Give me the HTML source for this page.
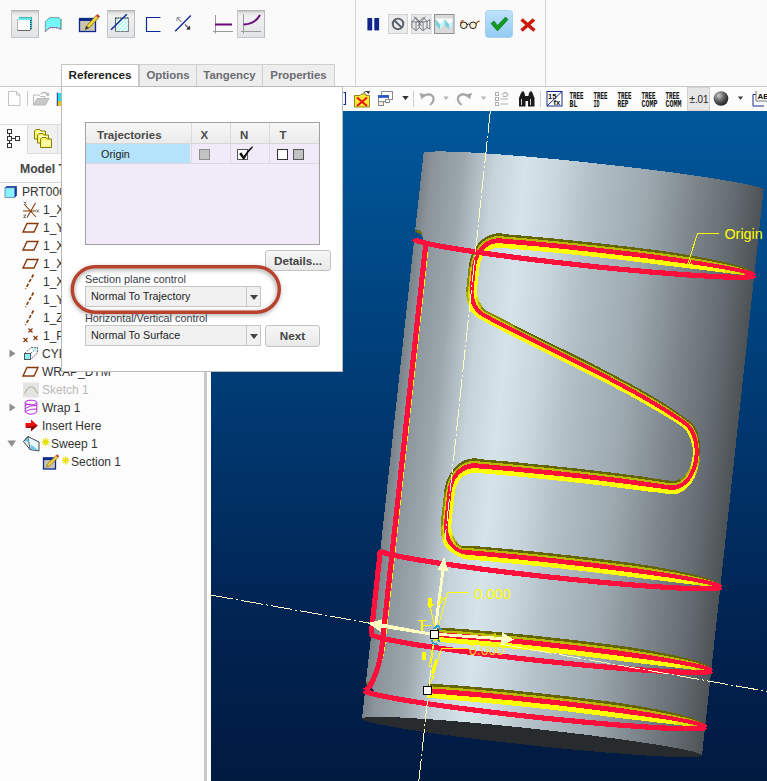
<!DOCTYPE html>
<html><head><meta charset="utf-8"><title>Sweep</title>
<style>
*{box-sizing:border-box}
html,body{margin:0;padding:0}
body{width:767px;height:781px;position:relative;overflow:hidden;background:#fbfbfb;font-family:"Liberation Sans",sans-serif;font-size:12px;color:#333}
.abs{position:absolute}
.vp{position:absolute;left:211px;top:111px}
#ribbon{left:0;top:0;width:767px;height:86px;background:#fafafa}
.vline{position:absolute;width:1px;background:#d4d4d4}
.hline{position:absolute;height:1px;background:#c9c9c9}
.pressed{position:absolute;background:linear-gradient(#c4c4c4 0,#e4e4e5 8%,#f0f0f1 22%,#e1e4e6 100%);border:1px solid #c6c6c6;border-top-color:#b4b4b4;border-right-color:#bcbcbc}
#tree{left:0;top:111px;width:204px;height:670px;background:#fcfcfc}
.row{position:absolute;left:0;height:18px;line-height:18px;font-size:12px;color:#333;white-space:nowrap}
.tab{position:absolute;top:64px;height:23px;border:1px solid #cfcfcf;background:#eeeeee;color:#6b6b72;font-weight:bold;font-size:11.4px;line-height:20px;text-align:center}
.tab.act{background:#fff;color:#1e1e1e;border-color:#c4c4c4;z-index:3;font-size:11.7px}
#panel{left:61px;top:86px;width:282px;height:286px;background:#fff;border:1px solid #b9b9b9;z-index:2}
.btn{position:absolute;border:1px solid #c3c3c3;border-radius:3px;background:linear-gradient(#f7f7f7,#e9e9e9);font-weight:bold;color:#444;font-size:11.7px;text-align:center}
.dd{position:absolute;border:1px solid #c6c6c6;background:#f1f1f1;font-size:10.8px;color:#222;line-height:19px;padding-left:5px}
.dd i{position:absolute;right:0;top:0;width:14px;height:100%;border-left:1px solid #c6c6c6}
.dd i:after{content:"";position:absolute;left:3px;top:8px;border:4px solid transparent;border-top:5px solid #444;border-bottom:0}
.lbl{position:absolute;font-size:10.8px;color:#363b46;white-space:nowrap}
</style></head><body>
<svg class="vp" width="556" height="670" viewBox="211 111 556 670" shape-rendering="crispEdges">
<defs><linearGradient id="bg" x1="0" y1="0" x2="0" y2="1"><stop offset="0" stop-color="#00589c"/><stop offset="0.4" stop-color="#003c75"/><stop offset="0.75" stop-color="#012453"/><stop offset="1" stop-color="#011a40"/></linearGradient>
<linearGradient id="cyl" gradientUnits="userSpaceOnUse" x1="392.8" y1="435.9" x2="732.8" y2="472.6"><stop offset="0" stop-color="#788288"/><stop offset="0.03" stop-color="#8a949a"/><stop offset="0.12" stop-color="#9da8ae"/><stop offset="0.21" stop-color="#c6d3db"/><stop offset="0.3" stop-color="#d5e3eb"/><stop offset="0.39" stop-color="#cad7df"/><stop offset="0.5" stop-color="#b3bfc6"/><stop offset="0.65" stop-color="#9fabb2"/><stop offset="0.8" stop-color="#7d868c"/><stop offset="0.92" stop-color="#646b70"/><stop offset="1" stop-color="#4c5256"/></linearGradient></defs>
<rect x="211" y="111" width="556" height="670" fill="url(#bg)"/>
<path fill="#272b2e" d="M702 755.3 L701.8 754.8 L701.1 754.3 L700 753.8 L698.4 753.2 L696.3 752.5 L693.8 751.8 L690.8 751.1 L687.4 750.3 L683.6 749.5 L679.3 748.6 L674.6 747.7 L669.5 746.8 L664.1 745.9 L658.2 744.9 L652.1 743.9 L645.5 742.9 L638.7 741.9 L631.6 740.9 L624.2 739.8 L616.5 738.8 L608.6 737.7 L600.5 736.7 L592.2 735.6 L583.7 734.6 L575.1 733.5 L566.3 732.5 L557.5 731.4 L548.6 730.4 L539.6 729.4 L530.7 728.5 L521.7 727.5 L512.7 726.6 L503.9 725.7 L495 724.8 L486.3 724 L477.8 723.2 L469.3 722.5 L461.1 721.8 L453 721.1 L445.2 720.5 L437.6 719.9 L430.3 719.3 L423.2 718.9 L416.5 718.4 L410.1 718.1 L404 717.7 L398.3 717.5 L392.9 717.2 L387.9 717.1 L383.4 717 L379.2 716.9 L375.5 716.9 L372.2 717 L369.4 717.1 L367 717.3 L365.1 717.5 L363.6 717.8 L362.6 718.1 L362.1 718.5 L362 718.9 L362.5 719.4 L363.4 720 L364.7 720.5 L366.6 721.2 L368.9 721.8 L371.6 722.6 L374.8 723.3 L378.4 724.1 L382.5 724.9 L387 725.8 L391.9 726.7 L397.1 727.6 L402.8 728.6 L408.8 729.6 L415.2 730.6 L421.8 731.6 L428.8 732.6 L436.1 733.6 L443.7 734.7 L451.4 735.7 L459.5 736.8 L467.7 737.9 L476.1 738.9 L484.6 740 L493.3 741 L502.1 742.1 L511 743.1 L519.9 744.1 L528.9 745.1 L537.8 746 L546.8 747 L555.7 747.9 L564.6 748.7 L573.3 749.6 L582 750.4 L590.5 751.2 L598.8 751.9 L607 752.6 L614.9 753.2 L622.6 753.8 L630.1 754.4 L637.3 754.9 L644.2 755.4 L650.8 755.8 L657 756.1 L662.9 756.4 L668.5 756.7 L673.6 756.9 L678.4 757 L682.8 757.1 L686.7 757.1 L690.2 757.1 L693.3 757 L695.9 756.8 L698 756.6 L699.7 756.4 L701 756.1 L701.7 755.7 L702 755.3Z"/>
<path fill="url(#cyl)" d="M423.6 153.2 L423.8 152.9 L424.2 152.6 L424.9 152.3 L425.9 152.1 L427.1 151.9 L428.6 151.8 L430.4 151.6 L432.4 151.5 L434.7 151.5 L437.2 151.4 L440 151.4 L443 151.4 L446.3 151.5 L449.7 151.6 L453.5 151.7 L457.4 151.8 L461.6 152 L465.9 152.2 L470.5 152.5 L475.2 152.8 L480.2 153.1 L485.3 153.4 L490.6 153.8 L496.1 154.1 L501.7 154.6 L507.4 155 L513.3 155.5 L519.3 156 L525.5 156.5 L531.7 157 L538.1 157.6 L544.5 158.2 L551 158.8 L557.6 159.4 L564.2 160.1 L570.9 160.7 L577.6 161.4 L584.4 162.1 L591.1 162.8 L597.9 163.6 L604.6 164.3 L611.4 165.1 L618.1 165.8 L624.7 166.6 L631.4 167.4 L637.9 168.2 L644.4 168.9 L650.8 169.7 L657.1 170.5 L663.4 171.3 L669.5 172.1 L675.5 172.9 L681.3 173.7 L687 174.5 L692.6 175.3 L698 176.1 L703.3 176.9 L708.4 177.6 L713.2 178.4 L718 179.1 L722.5 179.9 L726.8 180.6 L730.9 181.3 L734.7 182 L738.4 182.7 L741.8 183.3 L745 183.9 L748 184.6 L750.7 185.2 L753.1 185.7 L755.4 186.3 L757.3 186.8 L759 187.3 L760.4 187.8 L761.6 188.3 L762.5 188.7 L763.1 189.1 L763.5 189.5 L763.6 189.8 L702 755.3 L701.9 755 L701.5 754.6 L700.9 754.2 L700 753.8 L698.8 753.3 L697.4 752.8 L695.7 752.3 L693.8 751.8 L691.5 751.2 L689.1 750.7 L686.4 750.1 L683.4 749.4 L680.2 748.8 L676.8 748.2 L673.1 747.5 L669.3 746.8 L665.2 746.1 L660.9 745.4 L656.4 744.6 L651.6 743.9 L646.8 743.1 L641.7 742.4 L636.4 741.6 L631 740.8 L625.4 740 L619.7 739.2 L613.9 738.4 L607.9 737.6 L601.8 736.8 L595.5 736 L589.2 735.2 L582.8 734.4 L576.3 733.7 L569.8 732.9 L563.1 732.1 L556.5 731.3 L549.8 730.6 L543 729.8 L536.3 729.1 L529.5 728.3 L522.8 727.6 L516 726.9 L509.3 726.2 L502.6 725.6 L496 724.9 L489.4 724.3 L482.9 723.7 L476.5 723.1 L470.1 722.5 L463.9 722 L457.7 721.5 L451.7 721 L445.8 720.5 L440.1 720.1 L434.5 719.6 L429 719.3 L423.7 718.9 L418.6 718.6 L413.6 718.3 L408.9 718 L404.3 717.7 L400 717.5 L395.8 717.3 L391.9 717.2 L388.1 717.1 L384.7 717 L381.4 716.9 L378.4 716.9 L375.6 716.9 L373.1 717 L370.8 717 L368.8 717.1 L367 717.3 L365.5 717.4 L364.3 717.6 L363.3 717.8 L362.6 718.1 L362.2 718.4 L362 718.7Z"/>
<g>
<path fill="#004b8c" d="M412 229.5 L417 230.5 L422.5 236.5 L424.5 244 L419 243.5 L412 241 Z"/><path fill="#6e6e00" d="M415.3 231.5 L418 229.8 L421 231 L423 234.8 L420 234 Z"/>
<path fill="#02214c" d="M363 683 L366.5 684 L372 688 L374 691 L371 692.5 L364 694 Z"/><path fill="#6e6e00" d="M366 683.5 L372 679 L371 683 L369 685.5 Z"/>
<path fill="#646400" d="M754.3 275.4 L754.3 274.4 L754 273.6 L753.6 272.8 L752.9 272.1 L752 271.4 L750.9 270.7 L749.6 270 L748.1 269.2 L746.3 268.5 L744.4 267.7 L742.2 267 L739.9 266.2 L737.4 265.5 L734.6 264.7 L731.7 263.9 L728.6 263.1 L725.3 262.3 L721.9 261.5 L718.2 260.7 L714.4 259.9 L710.4 259.1 L706.3 258.3 L702 257.5 L697.6 256.7 L693 255.8 L688.3 255 L683.5 254.2 L678.5 253.4 L673.4 252.6 L668.2 251.8 L662.9 251.1 L657.5 250.3 L652 249.6 L646.4 248.9 L640.7 248.2 L635 247.5 L629.2 246.8 L623.3 246.1 L617.4 245.4 L611.5 244.7 L605.5 244 L599.5 243.4 L593.5 242.7 L587.5 242 L581.4 241.4 L575.4 240.7 L569.4 240.1 L563.4 239.5 L557.4 238.9 L551.5 238.3 L545.6 237.8 L539.8 237.2 L534 236.7 L528.2 236.1 L522.6 235.6 L517 235.2 L511.5 234.7 L506.1 234.3 L500.7 233.3 L496.9 233.4 L492.9 234.1 L489.1 235.4 L485.6 237.2 L482.2 239.6 L479.2 242.4 L476.5 245.8 L474.1 249.4 L472.1 253.4 L470.6 257.7 L469.4 262.1 L468.7 266.5 L470.6 266.6 L471.2 262.5 L472.3 258.4 L473.8 254.5 L475.6 250.8 L477.8 247.3 L480.4 244.3 L483.2 241.6 L486.3 239.4 L489.7 237.8 L493.2 236.6 L496.9 236 L500.5 236 L505.9 236.7 L511.3 237.1 L516.8 237.6 L522.3 238.1 L528 238.6 L533.7 239.1 L539.5 239.6 L545.3 240.2 L551.2 240.8 L557.2 241.3 L563.1 241.9 L569.1 242.6 L575.1 243.2 L581.2 243.8 L587.2 244.5 L593.2 245.1 L599.3 245.8 L605.3 246.5 L611.2 247.1 L617.2 247.8 L623.1 248.5 L628.9 249.2 L634.7 249.9 L640.5 250.6 L646.1 251.4 L651.7 252.1 L657.2 252.8 L662.6 253.5 L667.9 254.2 L673.2 255 L678.2 255.7 L683.2 256.5 L688.1 257.3 L692.8 258.1 L697.4 258.8 L701.8 259.6 L706.1 260.4 L710.2 261.1 L714.2 261.9 L718 262.7 L721.7 263.4 L725.1 264.1 L728.4 264.9 L731.5 265.6 L734.5 266.3 L737.2 267 L739.7 267.7 L742.1 268.4 L744.2 269 L746.2 269.7 L747.9 270.3 L749.5 271 L750.8 271.6 L751.9 272.2 L752.8 272.8 L753.5 273.4 L754 274 L754.3 274.6 L754.3 275.4Z"/>
<path fill="#8a8a00" d="M468.7 266.5 L468 273.6 L467.2 280.5 L466.4 287.6 L466.2 292.2 L468 292 L468.3 287.7 L469 280.6 L469.8 273.7 L470.6 266.6Z"/>
<path fill="#b1b100" d="M466.2 292.2 L466.4 296.8 L467.1 301.3 L468.9 300.5 L468.2 296.3 L468 292Z"/>
<path fill="#d8d800" d="M467.1 301.3 L468.2 305.6 L470 304.5 L468.9 300.5Z"/>
<path fill="#ffff00" d="M468.2 305.6 L469.8 309.6 L472.1 313.1 L475 315.8 L478.2 317.9 L481.4 319.7 L486.1 322.3 L490.7 324.9 L495.5 327.4 L500.4 329.9 L505.3 332.5 L510.3 335.1 L515.4 337.6 L520.6 340.2 L525.8 342.9 L531.1 345.5 L536.4 348.1 L541.8 350.8 L547.1 353.5 L552.6 356.2 L558 358.8 L563.5 361.6 L569 364.3 L574.4 367 L579.9 369.7 L585.4 372.5 L590.8 375.2 L596.2 378 L601.6 380.8 L607 383.5 L612.3 386.3 L617.6 389.1 L622.8 391.9 L628 394.7 L633 397.4 L638.1 400.2 L643 403 L647.9 405.8 L652.6 408.6 L657.3 411.3 L661.9 414 L666.4 416.7 L670.8 419.4 L675.1 422.1 L679.2 424.8 L683.2 427.4 L685.1 429 L686.6 431.1 L687.9 433.4 L689 435.8 L690 438.1 L691 440.6 L691.7 443.2 L692.3 445.9 L692.7 448.7 L692.8 451.6 L692.7 454.4 L692.5 457.3 L692 460.2 L691.4 462.9 L690.5 465.6 L691.8 466.5 L692.6 463.6 L693.3 460.7 L693.8 457.6 L694.1 454.5 L694.2 451.4 L694 448.3 L693.7 445.3 L693.1 442.4 L692.3 439.6 L691.3 436.9 L690.2 434.4 L688.9 431.9 L687.4 429.6 L685.8 427.6 L683.8 425.9 L679.8 423.2 L675.7 420.5 L671.5 417.8 L667.1 415.1 L662.7 412.4 L658.1 409.6 L653.4 406.9 L648.6 404.1 L643.8 401.3 L638.9 398.5 L633.8 395.8 L628.8 393 L623.6 390.2 L618.4 387.4 L613.1 384.6 L607.8 381.8 L602.5 379.1 L597.1 376.3 L591.7 373.5 L586.2 370.8 L580.8 368 L575.3 365.3 L569.8 362.6 L564.3 359.9 L558.9 357.2 L553.4 354.5 L548 351.8 L542.6 349.1 L537.2 346.4 L531.9 343.8 L526.6 341.2 L521.4 338.5 L516.2 335.9 L511.1 333.4 L506.1 330.8 L501.1 328.2 L496.3 325.7 L491.5 323.2 L486.8 320.6 L482.2 318.1 L479.2 316.3 L476.2 314.2 L473.6 311.5 L471.5 308.2 L470 304.5Z"/>
<path fill="#d8d800" d="M690.5 465.6 L689.5 468.1 L690.7 469.2 L691.8 466.5Z"/>
<path fill="#b1b100" d="M689.5 468.1 L688.3 470.5 L686.9 472.7 L685.4 474.6 L686.4 476.3 L688 474.1 L689.4 471.8 L690.7 469.2Z"/>
<path fill="#8a8a00" d="M685.4 474.6 L683.8 476.3 L682 477.8 L680.1 479 L680.7 481 L682.7 479.7 L684.6 478.1 L686.4 476.3Z"/>
<path fill="#646400" d="M680.1 479 L678.1 479.9 L676.1 480.5 L674 480.8 L671.8 480.8 L669.6 480.6 L664.9 480.2 L660.1 479.4 L655.1 478.6 L650 477.8 L644.8 476.9 L639.5 476.2 L634.1 475.5 L628.5 474.8 L622.9 474.1 L617.2 473.3 L611.5 472.6 L605.6 471.9 L599.7 471.2 L593.8 470.5 L587.8 469.8 L581.8 469.1 L575.8 468.4 L569.7 467.8 L563.6 467.1 L557.5 466.5 L551.5 465.8 L545.4 465.2 L539.4 464.6 L533.4 464 L527.4 463.4 L521.4 462.8 L515.5 462.2 L509.7 461.7 L503.9 461.2 L498.3 460.7 L492.6 460.2 L487.1 459.7 L481.7 459.3 L476.2 458.4 L472.4 458.4 L468.4 459.1 L464.6 460.4 L461 462.2 L457.7 464.6 L454.7 467.5 L452 470.8 L449.6 474.4 L447.6 478.4 L446.1 482.7 L444.9 487.1 L444.2 491.5 L446 491.6 L446.7 487.5 L447.8 483.4 L449.2 479.5 L451.1 475.8 L453.3 472.4 L455.9 469.3 L458.7 466.6 L461.8 464.4 L465.2 462.8 L468.7 461.6 L472.4 461 L476 461 L481.4 461.7 L486.8 462.1 L492.4 462.6 L498 463.1 L503.7 463.6 L509.4 464.1 L515.3 464.7 L521.2 465.2 L527.1 465.8 L533.1 466.4 L539.1 467 L545.1 467.6 L551.2 468.2 L557.3 468.9 L563.4 469.5 L569.4 470.2 L575.5 470.9 L581.5 471.6 L587.6 472.2 L593.5 472.9 L599.5 473.6 L605.4 474.3 L611.2 475.1 L617 475.8 L622.6 476.5 L628.3 477.2 L633.8 477.9 L639.2 478.6 L644.5 479.4 L649.8 480.1 L654.9 480.9 L659.8 481.7 L664.7 482.5 L669.4 483 L671.8 483.2 L674.1 483.1 L676.4 482.8 L678.6 482.1 L680.7 481Z"/>
<path fill="#8a8a00" d="M444.2 491.5 L443.5 497.8 L442.9 504 L442.2 510.1 L441.5 516.3 L440.8 522.7 L440.6 527 L442.4 526.8 L442.7 522.7 L443.3 516.4 L444 510.3 L444.7 504.1 L445.4 497.9 L446 491.6Z"/>
<path fill="#b1b100" d="M440.6 527 L440.8 531.5 L441.4 535.9 L443.2 535.1 L442.6 531 L442.4 526.8Z"/>
<path fill="#d8d800" d="M441.4 535.9 L442.4 540.1 L444.2 539 L443.2 535.1Z"/>
<path fill="#ffff00" d="M442.4 540.1 L444 544.1 L446 547.6 L448.7 550.3 L451.8 552.5 L455 554.3 L458.3 556.1 L461.7 557.9 L465.3 559.2 L470.7 559.8 L476.1 560.2 L481.6 560.7 L487.1 561.2 L492.8 561.7 L498.5 562.2 L504.3 562.8 L510.1 563.3 L516 563.9 L522 564.5 L527.9 565.1 L533.9 565.7 L540 566.3 L546 566.9 L552 567.6 L558 568.2 L564.1 568.9 L570.1 569.6 L576 570.3 L582 570.9 L587.9 571.6 L593.7 572.3 L599.5 573 L605.3 573.8 L610.9 574.5 L616.5 575.2 L622 575.9 L627.4 576.6 L632.8 577.3 L638 577.9 L643.1 578.5 L648.1 579.1 L652.9 579.7 L657.7 580.3 L662.3 580.8 L666.7 581.4 L671.1 581.9 L675.2 582.4 L679.2 582.9 L683.1 583.4 L686.8 583.8 L690.3 584.3 L693.6 584.7 L693.8 582.9 L690.5 582.5 L687 582 L683.3 581.4 L679.4 580.9 L675.4 580.4 L671.3 579.8 L667 579.2 L662.5 578.6 L657.9 578 L653.2 577.4 L648.3 576.8 L643.3 576.2 L638.2 575.5 L633 574.9 L627.7 574.2 L622.3 573.5 L616.8 572.7 L611.2 572 L605.5 571.3 L599.8 570.6 L594 569.9 L588.2 569.2 L582.2 568.5 L576.3 567.8 L570.3 567.1 L564.3 566.5 L558.3 565.8 L552.3 565.1 L546.2 564.5 L540.2 563.9 L534.2 563.2 L528.2 562.6 L522.2 562 L516.3 561.4 L510.4 560.9 L504.6 560.3 L498.8 559.8 L493.1 559.3 L487.4 558.8 L481.8 558.3 L476.3 557.8 L470.9 557.4 L465.6 556.8 L462.1 555.8 L458.9 554.3 L455.8 552.6 L452.8 550.8 L450 548.7 L447.6 546 L445.6 542.7 L444.2 539Z"/>
<path fill="#e2e200" d="M693.6 584.7 L696.7 585.1 L699.7 585.4 L702.5 585.8 L705.1 586.1 L707.5 586.4 L707.6 585 L705.2 584.7 L702.6 584.3 L699.9 583.8 L696.9 583.4 L693.8 582.9Z"/>
<path fill="#c5c500" d="M707.5 586.4 L709.6 586.7 L711.6 586.9 L713.4 587.1 L715 587.3 L716.4 587.5 L716.5 586.6 L715.1 586.3 L713.6 586 L711.8 585.7 L709.8 585.4 L707.6 585Z"/>
<path fill="#a8a800" d="M716.4 587.5 L717.6 587.6 L718.5 587.6 L719.3 587.7 L719.8 587.6 L719.9 587.2 L719.3 587.1 L718.6 587 L717.7 586.8 L716.5 586.6Z"/>
<path fill="#8c8c00" d="M719.8 587.6 L720.2 587.5 L720.3 587 L720.3 587 L720.2 587.2 L719.9 587.2Z"/>
<path fill="#b9b900" d="M754.3 275.4 L754.3 274.6 L754 274 L753.5 273.4 L752.8 272.8 L751.9 272.2 L750.8 271.6 L749.5 271 L747.9 270.3 L746.2 269.7 L744.2 269 L742.1 268.4 L739.7 267.7 L737.2 267 L734.5 266.3 L731.5 265.6 L728.4 264.9 L725.1 264.1 L721.7 263.4 L718 262.7 L714.2 261.9 L710.2 261.1 L706.1 260.4 L701.8 259.6 L697.4 258.8 L692.8 258.1 L688.1 257.3 L683.2 256.5 L678.2 255.7 L673.2 255 L667.9 254.2 L662.6 253.5 L657.2 252.8 L651.7 252.1 L646.1 251.4 L640.5 250.6 L634.7 249.9 L628.9 249.2 L623.1 248.5 L617.2 247.8 L611.2 247.1 L605.3 246.5 L599.3 245.8 L593.2 245.1 L587.2 244.5 L581.2 243.8 L575.1 243.2 L569.1 242.6 L563.1 241.9 L557.2 241.3 L551.2 240.8 L545.3 240.2 L539.5 239.6 L533.7 239.1 L528 238.6 L522.3 238.1 L516.8 237.6 L511.3 237.1 L505.9 236.7 L500.5 236 L496.9 236 L493.2 236.6 L489.7 237.8 L486.3 239.4 L483.2 241.6 L480.4 244.3 L477.8 247.3 L475.6 250.8 L473.8 254.5 L472.3 258.4 L471.2 262.5 L470.6 266.6 L472.2 266.8 L472.8 262.9 L473.8 259.1 L475.2 255.4 L476.9 251.9 L479 248.8 L481.4 245.9 L484.1 243.5 L487 241.4 L490.2 239.9 L493.5 238.8 L496.9 238.3 L500.3 238.3 L505.6 238.8 L511 239.3 L516.5 239.8 L522.1 240.2 L527.7 240.7 L533.5 241.3 L539.3 241.8 L545.1 242.4 L551 242.9 L556.9 243.5 L562.9 244.1 L568.9 244.7 L574.9 245.3 L580.9 246 L587 246.6 L593 247.3 L599 247.9 L605 248.6 L611 249.3 L616.9 250 L622.8 250.7 L628.7 251.4 L634.5 252.1 L640.2 252.8 L645.9 253.5 L651.5 254.2 L657 254.9 L662.4 255.7 L667.7 256.4 L672.9 257.1 L678 257.8 L683 258.6 L687.8 259.3 L692.6 260.1 L697.1 260.8 L701.6 261.5 L705.9 262.2 L710 263 L714 263.7 L717.8 264.4 L721.5 265 L725 265.7 L728.3 266.4 L731.4 267.1 L734.3 267.7 L737.1 268.3 L739.6 269 L742 269.6 L744.1 270.2 L746.1 270.7 L747.8 271.3 L749.4 271.8 L750.7 272.4 L751.8 272.9 L752.8 273.4 L753.5 273.9 L754 274.4 L754.2 274.9 L754.3 275.4Z"/>
<path fill="#caca00" d="M470.6 266.6 L469.8 273.7 L469 280.6 L468.3 287.7 L468 292 L469.7 291.8 L469.9 287.8 L470.7 280.7 L471.4 273.8 L472.2 266.8Z"/>
<path fill="#dcdc00" d="M468 292 L468.2 296.3 L468.9 300.5 L470.5 299.7 L469.9 295.8 L469.7 291.8Z"/>
<path fill="#eded00" d="M468.9 300.5 L470 304.5 L471.5 303.5 L470.5 299.7Z"/>
<path fill="#ffff00" d="M470 304.5 L471.5 308.2 L473.6 311.5 L476.2 314.2 L479.2 316.3 L482.2 318.1 L486.8 320.6 L491.5 323.2 L496.3 325.7 L501.1 328.2 L506.1 330.8 L511.1 333.4 L516.2 335.9 L521.4 338.5 L526.6 341.2 L531.9 343.8 L537.2 346.4 L542.6 349.1 L548 351.8 L553.4 354.5 L558.9 357.2 L564.3 359.9 L569.8 362.6 L575.3 365.3 L580.8 368 L586.2 370.8 L591.7 373.5 L597.1 376.3 L602.5 379.1 L607.8 381.8 L613.1 384.6 L618.4 387.4 L623.6 390.2 L628.8 393 L633.8 395.8 L638.9 398.5 L643.8 401.3 L648.6 404.1 L653.4 406.9 L658.1 409.6 L662.7 412.4 L667.1 415.1 L671.5 417.8 L675.7 420.5 L679.8 423.2 L683.8 425.9 L685.8 427.6 L687.4 429.6 L688.9 431.9 L690.2 434.4 L691.3 436.9 L692.3 439.6 L693.1 442.4 L693.7 445.3 L694 448.3 L694.2 451.4 L694.1 454.5 L693.8 457.6 L693.3 460.7 L692.6 463.6 L691.8 466.5 L692.8 467.3 L693.8 464.3 L694.5 461.1 L695 457.8 L695.3 454.6 L695.4 451.3 L695.2 448 L694.9 444.8 L694.3 441.7 L693.4 438.7 L692.4 435.9 L691.2 433.2 L689.8 430.7 L688.2 428.4 L686.4 426.3 L684.3 424.6 L680.4 421.9 L676.3 419.2 L672.1 416.4 L667.7 413.7 L663.3 410.9 L658.7 408.2 L654.1 405.4 L649.3 402.6 L644.5 399.8 L639.6 397.1 L634.6 394.3 L629.5 391.5 L624.3 388.7 L619.1 385.9 L613.9 383.1 L608.6 380.4 L603.2 377.6 L597.8 374.8 L592.4 372.1 L587 369.3 L581.5 366.5 L576 363.8 L570.6 361.1 L565.1 358.4 L559.6 355.7 L554.2 353 L548.7 350.3 L543.3 347.6 L538 344.9 L532.6 342.3 L527.4 339.6 L522.1 337 L516.9 334.4 L511.8 331.8 L506.8 329.3 L501.8 326.7 L497 324.2 L492.2 321.7 L487.5 319.1 L482.9 316.6 L480 314.8 L477.3 312.7 L474.9 310.1 L473 306.9 L471.5 303.5Z"/>
<path fill="#eded00" d="M691.8 466.5 L690.7 469.2 L691.7 470.2 L692.8 467.3Z"/>
<path fill="#dcdc00" d="M690.7 469.2 L689.4 471.8 L688 474.1 L686.4 476.3 L687.2 477.7 L688.9 475.4 L690.4 472.9 L691.7 470.2Z"/>
<path fill="#caca00" d="M686.4 476.3 L684.6 478.1 L682.7 479.7 L680.7 481 L681.2 482.9 L683.3 481.5 L685.3 479.7 L687.2 477.7Z"/>
<path fill="#b9b900" d="M680.7 481 L678.6 482.1 L676.4 482.8 L674.1 483.1 L671.8 483.2 L669.4 483 L664.7 482.5 L659.8 481.7 L654.9 480.9 L649.8 480.1 L644.5 479.4 L639.2 478.6 L633.8 477.9 L628.3 477.2 L622.6 476.5 L617 475.8 L611.2 475.1 L605.4 474.3 L599.5 473.6 L593.5 472.9 L587.6 472.2 L581.5 471.6 L575.5 470.9 L569.4 470.2 L563.4 469.5 L557.3 468.9 L551.2 468.2 L545.1 467.6 L539.1 467 L533.1 466.4 L527.1 465.8 L521.2 465.2 L515.3 464.7 L509.4 464.1 L503.7 463.6 L498 463.1 L492.4 462.6 L486.8 462.1 L481.4 461.7 L476 461 L472.4 461 L468.7 461.6 L465.2 462.8 L461.8 464.4 L458.7 466.6 L455.9 469.3 L453.3 472.4 L451.1 475.8 L449.2 479.5 L447.8 483.4 L446.7 487.5 L446 491.6 L447.7 491.8 L448.3 487.9 L449.3 484.1 L450.7 480.4 L452.4 476.9 L454.5 473.8 L456.9 470.9 L459.6 468.5 L462.5 466.4 L465.7 464.9 L469 463.8 L472.4 463.3 L475.8 463.3 L481.2 463.9 L486.6 464.3 L492.1 464.8 L497.8 465.3 L503.4 465.8 L509.2 466.3 L515 466.8 L520.9 467.4 L526.9 468 L532.9 468.6 L538.9 469.2 L544.9 469.8 L551 470.4 L557 471 L563.1 471.7 L569.2 472.4 L575.3 473 L581.3 473.7 L587.3 474.4 L593.3 475.1 L599.2 475.8 L605.1 476.5 L611 477.2 L616.7 477.9 L622.4 478.6 L628 479.4 L633.6 480.1 L639 480.8 L644.3 481.5 L649.5 482.3 L654.6 483 L659.6 483.8 L664.5 484.5 L669.2 485.1 L671.7 485.3 L674.2 485.2 L676.6 484.8 L678.9 484 L681.2 482.9Z"/>
<path fill="#caca00" d="M446 491.6 L445.4 497.9 L444.7 504.1 L444 510.3 L443.3 516.4 L442.7 522.7 L442.4 526.8 L444.1 526.7 L444.3 522.8 L445 516.5 L445.6 510.4 L446.3 504.2 L447 498 L447.7 491.8Z"/>
<path fill="#dcdc00" d="M442.4 526.8 L442.6 531 L443.2 535.1 L444.8 534.4 L444.2 530.6 L444.1 526.7Z"/>
<path fill="#eded00" d="M443.2 535.1 L444.2 539 L445.8 538 L444.8 534.4Z"/>
<path fill="#ffff00" d="M444.2 539 L445.6 542.7 L447.6 546 L450 548.7 L452.8 550.8 L455.8 552.6 L458.9 554.3 L462.1 555.8 L465.6 556.8 L470.9 557.4 L476.3 557.8 L481.8 558.3 L487.4 558.8 L493.1 559.3 L498.8 559.8 L504.6 560.3 L510.4 560.9 L516.3 561.4 L522.2 562 L528.2 562.6 L534.2 563.2 L540.2 563.9 L546.2 564.5 L552.3 565.1 L558.3 565.8 L564.3 566.5 L570.3 567.1 L576.3 567.8 L582.2 568.5 L588.2 569.2 L594 569.9 L599.8 570.6 L605.5 571.3 L611.2 572 L616.8 572.7 L622.3 573.5 L627.7 574.2 L633 574.9 L638.2 575.5 L643.3 576.2 L648.3 576.8 L653.2 577.4 L657.9 578 L662.5 578.6 L667 579.2 L671.3 579.8 L675.4 580.4 L679.4 580.9 L683.3 581.4 L687 582 L690.5 582.5 L693.8 582.9 L693.9 581.4 L690.6 580.9 L687.1 580.3 L683.5 579.7 L679.6 579.1 L675.6 578.5 L671.5 577.9 L667.2 577.3 L662.7 576.7 L658.1 576 L653.4 575.4 L648.5 574.7 L643.6 574.1 L638.5 573.4 L633.3 572.7 L627.9 572 L622.5 571.3 L617 570.6 L611.4 569.9 L605.8 569.2 L600 568.5 L594.2 567.7 L588.4 567 L582.5 566.3 L576.5 565.7 L570.6 565 L564.6 564.3 L558.5 563.6 L552.5 563 L546.5 562.3 L540.5 561.7 L534.4 561.1 L528.4 560.5 L522.5 559.9 L516.5 559.3 L510.6 558.7 L504.8 558.2 L499 557.6 L493.3 557.1 L487.6 556.6 L482.1 556.1 L476.6 555.6 L471.2 555.2 L465.8 554.7 L462.6 554 L459.4 552.7 L456.5 551.2 L453.7 549.4 L451.2 547.2 L448.9 544.6 L447.1 541.5 L445.8 538Z"/>
<path fill="#e2e200" d="M693.8 582.9 L696.9 583.4 L699.9 583.8 L702.6 584.3 L705.2 584.7 L707.6 585 L707.7 583.8 L705.4 583.4 L702.8 582.9 L700 582.4 L697.1 581.9 L693.9 581.4Z"/>
<path fill="#c5c500" d="M707.6 585 L709.8 585.4 L711.8 585.7 L713.6 586 L715.1 586.3 L716.5 586.6 L716.6 585.8 L715.2 585.4 L713.7 585.1 L711.9 584.7 L709.9 584.3 L707.7 583.8Z"/>
<path fill="#a8a800" d="M716.5 586.6 L717.7 586.8 L718.6 587 L719.3 587.1 L719.9 587.2 L719.9 586.8 L719.4 586.6 L718.7 586.3 L717.7 586.1 L716.6 585.8Z"/>
<path fill="#8c8c00" d="M719.9 587.2 L720.2 587.2 L720.3 587 L720.3 587 L720.2 587 L719.9 586.8Z"/>
<path fill="#8c8c00" d="M754.3 275.4 L754.1 275.9 L753.8 276 L753.2 276 L753.3 275.5 L753.8 275.6 L754.1 275.6 L754.3 275.4Z"/>
<path fill="#a8a800" d="M753.2 276 L752.5 276 L751.5 275.9 L750.3 275.8 L749 275.7 L749.1 274.7 L750.4 274.9 L751.6 275.1 L752.6 275.3 L753.3 275.5Z"/>
<path fill="#c5c500" d="M749 275.7 L747.4 275.5 L745.6 275.3 L743.6 275.1 L741.4 274.8 L739 274.5 L739.2 273 L741.5 273.4 L743.7 273.8 L745.7 274.1 L747.5 274.4 L749.1 274.7Z"/>
<path fill="#e2e200" d="M739 274.5 L736.4 274.2 L733.6 273.8 L730.7 273.4 L727.5 273 L724.2 272.6 L724.4 270.8 L727.7 271.3 L730.9 271.8 L733.8 272.2 L736.6 272.6 L739.2 273Z"/>
<path fill="#ffff00" d="M724.2 272.6 L720.7 272.2 L717 271.7 L713.2 271.3 L709.2 270.8 L705 270.3 L700.7 269.7 L696.2 269.2 L691.6 268.7 L686.9 268.1 L682 267.5 L677 266.9 L671.9 266.3 L666.7 265.7 L661.4 265 L656 264.3 L650.5 263.6 L644.9 262.8 L639.2 262.1 L633.5 261.4 L627.7 260.7 L621.8 260 L615.9 259.3 L610 258.6 L604 257.9 L598 257.3 L592 256.6 L586 255.9 L579.9 255.3 L573.9 254.7 L567.9 254 L561.9 253.4 L555.9 252.8 L550 252.2 L544.1 251.7 L538.2 251.1 L532.5 250.6 L526.7 250.1 L521.1 249.6 L515.5 249.1 L510 248.6 L504.6 248.2 L499.4 248.2 L496.9 248.1 L494.6 248.4 L492.3 249.1 L490.1 250 L488.1 251.4 L486.1 253 L484.4 254.9 L482.9 257 L481.6 259.4 L480.6 261.9 L479.9 264.6 L479.4 267.5 L478.7 274.3 L477.9 281.2 L477.2 288 L477 291 L477.2 293.8 L477.6 296.6 L475.8 297.4 L475.2 294.3 L475 291.2 L475.2 288 L476 281.1 L476.7 274.2 L477.5 267.3 L478 264.2 L478.8 261.2 L479.9 258.4 L481.3 255.7 L483 253.3 L484.9 251.1 L487 249.3 L489.3 247.8 L491.8 246.7 L494.3 245.9 L496.9 245.6 L499.7 245.6 L504.9 245.7 L510.3 246.2 L515.8 246.6 L521.3 247.1 L527 247.6 L532.7 248.2 L538.5 248.7 L544.3 249.2 L550.2 249.8 L556.2 250.4 L562.1 251 L568.1 251.6 L574.2 252.2 L580.2 252.9 L586.2 253.5 L592.3 254.2 L598.3 254.8 L604.3 255.5 L610.3 256.2 L616.2 256.9 L622.1 257.6 L627.9 258.3 L633.7 259 L639.5 259.7 L645.1 260.4 L650.7 261.1 L656.2 261.8 L661.6 262.5 L667 263.3 L672.2 263.9 L677.3 264.5 L682.3 265.2 L687.1 265.8 L691.9 266.4 L696.5 267 L700.9 267.6 L705.2 268.2 L709.4 268.7 L713.4 269.3 L717.2 269.8 L720.9 270.3 L724.4 270.8Z"/>
<path fill="#d8d800" d="M477.6 296.6 L478.4 299.1 L479.5 301.5 L477.8 302.9 L476.6 300.3 L475.8 297.4Z"/>
<path fill="#b1b100" d="M479.5 301.5 L480.8 303.8 L482 306.3 L480.8 307.9 L479.2 305.5 L477.8 302.9Z"/>
<path fill="#8a8a00" d="M482 306.3 L483.6 308.5 L485.8 310.3 L490.3 312.6 L495.1 315.1 L499.9 317.6 L504.9 320.2 L509.9 322.7 L514.9 325.3 L514.1 327 L509.1 324.4 L504.1 321.9 L499.2 319.3 L494.3 316.8 L489.6 314.3 L485 311.9 L482.6 310.2 L480.8 307.9Z"/>
<path fill="#646400" d="M514.9 325.3 L520.1 327.9 L525.3 330.5 L530.5 333.1 L535.8 335.8 L541.2 338.4 L546.6 341.1 L552 343.8 L557.4 346.5 L562.9 349.2 L568.3 351.9 L573.8 354.6 L579.3 357.3 L584.8 360.1 L590.2 362.8 L595.7 365.6 L601.1 368.3 L606.4 371.1 L611.8 373.9 L617 376.7 L622.3 379.5 L627.5 382.2 L632.6 385 L637.6 387.8 L642.6 390.6 L647.5 393.4 L652.3 396.2 L657 399 L661.5 401.8 L666 404.7 L670.4 407.6 L674.6 410.4 L678.7 413.3 L682.7 416.1 L686.6 419 L689.1 420.8 L691.4 422.9 L693.6 425.2 L695.6 428 L697.1 431.2 L698.3 434.8 L699.2 438.6 L699.9 442.5 L700.3 446.5 L700.4 450.6 L700.3 454.8 L699 454.7 L699.1 450.8 L699 446.9 L698.6 443.1 L698 439.4 L697.1 435.8 L695.9 432.4 L694.4 429.4 L692.6 426.6 L690.6 424.3 L688.4 422.3 L686 420.5 L682.1 417.6 L678.1 414.8 L673.9 412 L669.7 409.2 L665.3 406.3 L660.8 403.5 L656.2 400.7 L651.5 397.9 L646.7 395.1 L641.8 392.3 L636.8 389.5 L631.8 386.7 L626.6 383.9 L621.5 381.1 L616.2 378.4 L610.9 375.6 L605.6 372.8 L600.2 370 L594.8 367.3 L589.4 364.5 L583.9 361.8 L578.4 359 L573 356.3 L567.5 353.6 L562 350.9 L556.6 348.2 L551.1 345.5 L545.7 342.8 L540.3 340.1 L535 337.5 L529.7 334.8 L524.4 332.2 L519.2 329.6 L514.1 327Z"/>
<path fill="#8a8a00" d="M700.3 454.8 L699.9 458.9 L698.6 458.6 L699 454.7Z"/>
<path fill="#b1b100" d="M699.9 458.9 L699.3 462.9 L698.4 466.9 L697.2 466.2 L698 462.4 L698.6 458.6Z"/>
<path fill="#d8d800" d="M698.4 466.9 L697.3 470.7 L695.9 474.4 L694.9 473.3 L696.1 469.8 L697.2 466.2Z"/>
<path fill="#ffff00" d="M695.9 474.4 L694.4 477.9 L692.6 481.1 L690.6 484 L688.4 486.6 L685.9 488.9 L683.3 490.8 L680.6 492.4 L677.6 493.5 L674.6 494.2 L671.4 494.4 L668.3 494.3 L663.5 493.2 L658.7 492.6 L653.7 492.1 L648.5 491.5 L643.3 490.8 L638 490.1 L632.5 489.4 L627 488.7 L621.4 488 L615.7 487.3 L609.9 486.5 L604.1 485.8 L598.2 485.1 L592.3 484.4 L586.3 483.7 L580.3 483 L574.2 482.4 L568.2 481.7 L562.1 481 L556 480.4 L550 479.7 L543.9 479.1 L537.9 478.5 L531.8 477.9 L525.9 477.3 L519.9 476.7 L514 476.2 L508.2 475.6 L502.4 475.1 L496.7 474.6 L491.1 474.1 L485.6 473.6 L480.2 473.2 L474.9 473.2 L472.4 473.1 L470.1 473.4 L467.8 474.1 L465.6 475 L463.5 476.4 L461.6 478 L459.9 479.9 L458.4 482 L457.1 484.4 L456.1 487 L455.3 489.6 L454.9 492.5 L454.2 498.5 L453.6 504.7 L452.9 510.9 L452.2 517 L451.6 523 L451.4 526 L451.5 528.7 L452 531.3 L452.7 533.8 L450.9 534.9 L450.1 532.1 L449.6 529.2 L449.4 526.1 L449.6 523 L450.3 516.9 L451 510.7 L451.6 504.6 L452.3 498.4 L453 492.3 L453.5 489.2 L454.3 486.2 L455.4 483.4 L456.8 480.7 L458.5 478.3 L460.4 476.1 L462.5 474.3 L464.8 472.8 L467.3 471.7 L469.8 470.9 L472.4 470.6 L475.2 470.6 L480.4 470.7 L485.9 471.2 L491.4 471.7 L497 472.2 L502.7 472.7 L508.5 473.2 L514.3 473.7 L520.2 474.3 L526.1 474.9 L532.1 475.4 L538.1 476 L544.2 476.7 L550.2 477.3 L556.3 477.9 L562.4 478.6 L568.4 479.3 L574.5 479.9 L580.6 480.6 L586.6 481.3 L592.5 482 L598.5 482.7 L604.4 483.4 L610.2 484.1 L616 484.8 L621.7 485.5 L627.3 486.3 L632.8 487 L638.2 487.7 L643.6 488.4 L648.8 489.1 L653.9 489.7 L658.9 490.3 L663.8 491 L668.5 491.9 L671.5 492.1 L674.5 491.8 L677.4 491.2 L680.1 490.2 L682.8 488.8 L685.3 487 L687.6 484.8 L689.7 482.4 L691.6 479.6 L693.4 476.6 L694.9 473.3Z"/>
<path fill="#d8d800" d="M452.7 533.8 L453.8 536.2 L452 537.6 L450.9 534.9Z"/>
<path fill="#b1b100" d="M453.8 536.2 L454.9 538.4 L456.1 540.8 L454.8 542.5 L453.4 540 L452 537.6Z"/>
<path fill="#8a8a00" d="M456.1 540.8 L457.6 543.1 L459.5 544.9 L461.8 545.8 L461.2 547.6 L458.7 546.5 L456.6 544.7 L454.8 542.5Z"/>
<path fill="#646400" d="M461.8 545.8 L464.4 545.9 L467 545.6 L472.2 545.9 L477.6 546.3 L483.1 546.8 L488.7 547.3 L494.3 547.8 L500 548.3 L505.8 548.8 L511.7 549.4 L517.5 549.9 L523.5 550.5 L529.5 551.1 L535.5 551.7 L541.5 552.4 L547.5 553 L553.5 553.6 L559.6 554.3 L565.6 555 L571.6 555.6 L577.6 556.3 L583.5 557 L589.4 557.7 L595.3 558.4 L601.1 559.1 L606.8 559.8 L612.5 560.5 L618 561.3 L623.5 562 L629 562.7 L634.3 563.4 L639.5 564.2 L644.6 565 L649.5 565.8 L654.4 566.6 L659.1 567.5 L663.7 568.3 L668.1 569.1 L672.4 569.9 L676.5 570.7 L680.5 571.5 L684.3 572.3 L687.9 573.2 L691.4 574 L694.7 574.7 L697.8 575.5 L700.7 576.3 L703.4 577.1 L706 577.9 L708.3 578.6 L710.4 579.4 L712.4 580.1 L714.1 580.8 L715.6 581.6 L717 582.3 L718.1 583 L719 583.7 L719.6 584.5 L720.1 585.2 L720.3 586 L720.3 587 L720.3 587 L720.3 586.3 L720 585.6 L719.6 585 L718.9 584.4 L718 583.8 L716.9 583.2 L715.5 582.6 L714 581.9 L712.3 581.3 L710.3 580.6 L708.2 580 L705.8 579.3 L703.3 578.6 L700.5 577.9 L697.6 577.2 L694.5 576.5 L691.2 575.8 L687.7 575 L684.1 574.3 L680.3 573.5 L676.3 572.8 L672.1 572 L667.8 571.2 L663.4 570.5 L658.8 569.7 L654.1 568.9 L649.3 568.1 L644.3 567.4 L639.2 566.6 L634 565.8 L628.7 565.1 L623.3 564.4 L617.8 563.7 L612.2 563 L606.5 562.3 L600.8 561.6 L595 560.9 L589.1 560.2 L583.2 559.5 L577.3 558.8 L571.3 558.1 L565.3 557.4 L559.3 556.7 L553.3 556.1 L547.2 555.4 L541.2 554.8 L535.2 554.2 L529.2 553.6 L523.2 553 L517.3 552.4 L511.4 551.8 L505.5 551.3 L499.8 550.7 L494 550.2 L488.4 549.7 L482.8 549.2 L477.3 548.8 L471.9 548.3 L466.7 548 L463.9 548 L461.2 547.6Z"/>
<path fill="#8c8c00" d="M754.3 275.4 L754.1 275.6 L753.8 275.6 L753.3 275.5 L753.3 275 L753.9 275.2 L754.2 275.4 L754.3 275.4Z"/>
<path fill="#a8a800" d="M753.3 275.5 L752.6 275.3 L751.6 275.1 L750.4 274.9 L749.1 274.7 L749.2 273.8 L750.5 274.1 L751.7 274.4 L752.6 274.7 L753.3 275Z"/>
<path fill="#c5c500" d="M749.1 274.7 L747.5 274.4 L745.7 274.1 L743.7 273.8 L741.5 273.4 L739.2 273 L739.3 271.8 L741.7 272.2 L743.9 272.6 L745.8 273 L747.6 273.4 L749.2 273.8Z"/>
<path fill="#e2e200" d="M739.2 273 L736.6 272.6 L733.8 272.2 L730.9 271.8 L727.7 271.3 L724.4 270.8 L724.6 269.2 L727.9 269.8 L731 270.3 L734 270.8 L736.7 271.3 L739.3 271.8Z"/>
<path fill="#ffff00" d="M724.4 270.8 L720.9 270.3 L717.2 269.8 L713.4 269.3 L709.4 268.7 L705.2 268.2 L700.9 267.6 L696.5 267 L691.9 266.4 L687.1 265.8 L682.3 265.2 L677.3 264.5 L672.2 263.9 L667 263.3 L661.6 262.5 L656.2 261.8 L650.7 261.1 L645.1 260.4 L639.5 259.7 L633.7 259 L627.9 258.3 L622.1 257.6 L616.2 256.9 L610.3 256.2 L604.3 255.5 L598.3 254.8 L592.3 254.2 L586.2 253.5 L580.2 252.9 L574.2 252.2 L568.1 251.6 L562.1 251 L556.2 250.4 L550.2 249.8 L544.3 249.2 L538.5 248.7 L532.7 248.2 L527 247.6 L521.3 247.1 L515.8 246.6 L510.3 246.2 L504.9 245.7 L499.7 245.6 L496.9 245.6 L494.3 245.9 L491.8 246.7 L489.3 247.8 L487 249.3 L484.9 251.1 L483 253.3 L481.3 255.7 L479.9 258.4 L478.8 261.2 L478 264.2 L477.5 267.3 L476.7 274.2 L476 281.1 L475.2 288 L475 291.2 L475.2 294.3 L475.8 297.4 L474.1 298.1 L473.5 294.8 L473.3 291.4 L473.5 287.9 L474.3 281 L475 274 L475.8 267.1 L476.3 263.8 L477.2 260.5 L478.4 257.4 L479.9 254.5 L481.7 251.9 L483.8 249.5 L486.1 247.5 L488.6 245.8 L491.3 244.5 L494.1 243.7 L496.9 243.3 L499.9 243.3 L505.1 243.6 L510.5 244 L516 244.5 L521.6 245 L527.2 245.5 L533 246 L538.7 246.5 L544.6 247.1 L550.5 247.7 L556.4 248.2 L562.4 248.8 L568.4 249.4 L574.4 250.1 L580.4 250.7 L586.5 251.4 L592.5 252 L598.5 252.7 L604.5 253.4 L610.5 254 L616.4 254.7 L622.3 255.4 L628.2 256.1 L634 256.8 L639.7 257.5 L645.4 258.2 L651 259 L656.5 259.7 L661.9 260.4 L667.2 261.1 L672.4 261.8 L677.5 262.4 L682.5 263.1 L687.4 263.8 L692.1 264.4 L696.7 265.1 L701.1 265.7 L705.4 266.3 L709.6 266.9 L713.6 267.5 L717.4 268.1 L721.1 268.7 L724.6 269.2Z"/>
<path fill="#eded00" d="M475.8 297.4 L476.6 300.3 L477.8 302.9 L476.3 304.2 L475 301.3 L474.1 298.1Z"/>
<path fill="#dcdc00" d="M477.8 302.9 L479.2 305.5 L480.8 307.9 L479.7 309.4 L477.9 306.9 L476.3 304.2Z"/>
<path fill="#caca00" d="M480.8 307.9 L482.6 310.2 L485 311.9 L489.6 314.3 L494.3 316.8 L499.2 319.3 L504.1 321.9 L509.1 324.4 L514.1 327 L513.4 328.5 L508.3 325.9 L503.4 323.4 L498.5 320.8 L493.7 318.3 L488.9 315.8 L484.3 313.4 L481.8 311.6 L479.7 309.4Z"/>
<path fill="#b9b900" d="M514.1 327 L519.2 329.6 L524.4 332.2 L529.7 334.8 L535 337.5 L540.3 340.1 L545.7 342.8 L551.1 345.5 L556.6 348.2 L562 350.9 L567.5 353.6 L573 356.3 L578.4 359 L583.9 361.8 L589.4 364.5 L594.8 367.3 L600.2 370 L605.6 372.8 L610.9 375.6 L616.2 378.4 L621.5 381.1 L626.6 383.9 L631.8 386.7 L636.8 389.5 L641.8 392.3 L646.7 395.1 L651.5 397.9 L656.2 400.7 L660.8 403.5 L665.3 406.3 L669.7 409.2 L673.9 412 L678.1 414.8 L682.1 417.6 L686 420.5 L688.4 422.3 L690.6 424.3 L692.6 426.6 L694.4 429.4 L695.9 432.4 L697.1 435.8 L698 439.4 L698.6 443.1 L699 446.9 L699.1 450.8 L699 454.7 L697.9 454.7 L698 450.9 L697.8 447.2 L697.4 443.6 L696.8 440.1 L695.9 436.7 L694.8 433.5 L693.4 430.6 L691.7 427.9 L689.8 425.6 L687.7 423.5 L685.5 421.8 L681.6 419 L677.5 416.2 L673.4 413.4 L669.1 410.6 L664.7 407.8 L660.2 405 L655.5 402.2 L650.8 399.4 L646 396.6 L641.1 393.8 L636.1 391 L631.1 388.2 L625.9 385.4 L620.7 382.6 L615.5 379.9 L610.2 377.1 L604.8 374.3 L599.5 371.5 L594.1 368.8 L588.6 366 L583.2 363.3 L577.7 360.5 L572.2 357.8 L566.7 355.1 L561.3 352.4 L555.8 349.7 L550.4 347 L545 344.3 L539.6 341.6 L534.3 339 L529 336.3 L523.7 333.7 L518.5 331.1 L513.4 328.5Z"/>
<path fill="#caca00" d="M699 454.7 L698.6 458.6 L697.5 458.4 L697.9 454.7Z"/>
<path fill="#dcdc00" d="M698.6 458.6 L698 462.4 L697.2 466.2 L696.1 465.6 L696.9 462 L697.5 458.4Z"/>
<path fill="#eded00" d="M697.2 466.2 L696.1 469.8 L694.9 473.3 L693.9 472.3 L695.1 469 L696.1 465.6Z"/>
<path fill="#ffff00" d="M694.9 473.3 L693.4 476.6 L691.6 479.6 L689.7 482.4 L687.6 484.8 L685.3 487 L682.8 488.8 L680.1 490.2 L677.4 491.2 L674.5 491.8 L671.5 492.1 L668.5 491.9 L663.8 491 L658.9 490.3 L653.9 489.7 L648.8 489.1 L643.6 488.4 L638.2 487.7 L632.8 487 L627.3 486.3 L621.7 485.5 L616 484.8 L610.2 484.1 L604.4 483.4 L598.5 482.7 L592.5 482 L586.6 481.3 L580.6 480.6 L574.5 479.9 L568.4 479.3 L562.4 478.6 L556.3 477.9 L550.2 477.3 L544.2 476.7 L538.1 476 L532.1 475.4 L526.1 474.9 L520.2 474.3 L514.3 473.7 L508.5 473.2 L502.7 472.7 L497 472.2 L491.4 471.7 L485.9 471.2 L480.4 470.7 L475.2 470.6 L472.4 470.6 L469.8 470.9 L467.3 471.7 L464.8 472.8 L462.5 474.3 L460.4 476.1 L458.5 478.3 L456.8 480.7 L455.4 483.4 L454.3 486.2 L453.5 489.2 L453 492.3 L452.3 498.4 L451.6 504.6 L451 510.7 L450.3 516.9 L449.6 523 L449.4 526.1 L449.6 529.2 L450.1 532.1 L450.9 534.9 L449.3 535.9 L448.4 532.8 L447.9 529.6 L447.7 526.3 L447.9 522.9 L448.6 516.8 L449.3 510.6 L450 504.4 L450.6 498.3 L451.3 492.2 L451.8 488.8 L452.7 485.5 L453.9 482.4 L455.4 479.5 L457.2 476.9 L459.3 474.5 L461.6 472.5 L464.1 470.8 L466.8 469.5 L469.5 468.7 L472.4 468.3 L475.4 468.3 L480.7 468.6 L486.1 469 L491.6 469.5 L497.2 470 L502.9 470.5 L508.7 471 L514.5 471.6 L520.4 472.1 L526.4 472.7 L532.3 473.3 L538.4 473.9 L544.4 474.5 L550.5 475.1 L556.5 475.8 L562.6 476.4 L568.7 477.1 L574.7 477.8 L580.8 478.4 L586.8 479.1 L592.8 479.8 L598.7 480.5 L604.6 481.2 L610.4 482 L616.2 482.7 L621.9 483.4 L627.5 484.1 L633 484.8 L638.5 485.5 L643.8 486.3 L649 486.9 L654.1 487.6 L659.1 488.3 L664 488.9 L668.7 489.7 L671.6 489.9 L674.4 489.8 L677.1 489.2 L679.8 488.2 L682.3 486.9 L684.7 485.2 L686.9 483.2 L688.9 480.9 L690.8 478.3 L692.4 475.4 L693.9 472.3Z"/>
<path fill="#eded00" d="M450.9 534.9 L452 537.6 L450.5 538.8 L449.3 535.9Z"/>
<path fill="#dcdc00" d="M452 537.6 L453.4 540 L454.8 542.5 L453.7 543.9 L452 541.4 L450.5 538.8Z"/>
<path fill="#caca00" d="M454.8 542.5 L456.6 544.7 L458.7 546.5 L461.2 547.6 L460.6 549.2 L458 548 L455.7 546.2 L453.7 543.9Z"/>
<path fill="#b9b900" d="M461.2 547.6 L463.9 548 L466.7 548 L471.9 548.3 L477.3 548.8 L482.8 549.2 L488.4 549.7 L494 550.2 L499.8 550.7 L505.5 551.3 L511.4 551.8 L517.3 552.4 L523.2 553 L529.2 553.6 L535.2 554.2 L541.2 554.8 L547.2 555.4 L553.3 556.1 L559.3 556.7 L565.3 557.4 L571.3 558.1 L577.3 558.8 L583.2 559.5 L589.1 560.2 L595 560.9 L600.8 561.6 L606.5 562.3 L612.2 563 L617.8 563.7 L623.3 564.4 L628.7 565.1 L634 565.8 L639.2 566.6 L644.3 567.4 L649.3 568.1 L654.1 568.9 L658.8 569.7 L663.4 570.5 L667.8 571.2 L672.1 572 L676.3 572.8 L680.3 573.5 L684.1 574.3 L687.7 575 L691.2 575.8 L694.5 576.5 L697.6 577.2 L700.5 577.9 L703.3 578.6 L705.8 579.3 L708.2 580 L710.3 580.6 L712.3 581.3 L714 581.9 L715.5 582.6 L716.9 583.2 L718 583.8 L718.9 584.4 L719.6 585 L720 585.6 L720.3 586.3 L720.3 587 L720.3 587 L720.3 586.5 L720 586 L719.5 585.5 L718.8 585 L717.9 584.5 L716.8 584 L715.4 583.5 L713.9 582.9 L712.1 582.4 L710.2 581.8 L708 581.2 L705.7 580.6 L703.1 580 L700.4 579.3 L697.4 578.7 L694.3 578 L691 577.4 L687.5 576.7 L683.9 576 L680.1 575.3 L676.1 574.6 L671.9 573.9 L667.6 573.1 L663.2 572.4 L658.6 571.7 L653.9 570.9 L649 570.2 L644.1 569.5 L639 568.7 L633.8 568 L628.5 567.3 L623 566.6 L617.5 565.8 L612 565.1 L606.3 564.4 L600.6 563.7 L594.8 563 L588.9 562.3 L583 561.6 L577.1 560.9 L571.1 560.2 L565.1 559.6 L559.1 558.9 L553 558.2 L547 557.6 L541 557 L535 556.3 L529 555.7 L523 555.1 L517 554.5 L511.2 554 L505.3 553.4 L499.5 552.9 L493.8 552.4 L488.2 551.9 L482.6 551.4 L477.1 550.9 L471.7 550.5 L466.4 550.1 L463.5 549.9 L460.6 549.2Z"/>
<path fill="#646400" d="M711.2 670.7 L711.2 669.6 L711 668.7 L710.5 668 L709.8 667.2 L708.9 666.4 L707.8 665.7 L706.5 664.9 L704.9 664.2 L703.2 663.4 L701.2 662.7 L699 661.9 L696.6 661.1 L694 660.3 L691.3 659.5 L688.3 658.7 L685.1 657.9 L681.8 657.1 L678.3 656.3 L674.6 655.4 L670.7 654.6 L666.7 653.8 L662.5 652.9 L658.1 652.1 L653.6 651.3 L649 650.4 L644.2 649.6 L639.3 648.8 L634.2 647.9 L629.1 647.1 L623.8 646.3 L618.4 645.6 L612.9 644.9 L607.4 644.2 L601.7 643.5 L596 642.7 L590.2 642 L584.3 641.3 L578.4 640.6 L572.4 639.9 L566.4 639.2 L560.4 638.5 L554.3 637.8 L548.2 637.2 L542.1 636.5 L536 635.9 L530 635.2 L523.9 634.6 L517.9 634 L511.8 633.4 L505.9 632.8 L500 632.3 L494.1 631.7 L488.3 631.2 L482.5 630.7 L476.9 630.2 L471.3 629.7 L465.8 629.2 L460.4 628.8 L455.1 628.5 L449.9 628.2 L444.9 627.9 L439.9 627.7 L435.1 627.5 L434.8 629.9 L439.6 630.1 L444.6 630.4 L449.7 630.7 L454.8 631 L460.1 631.4 L465.5 631.8 L471 632.3 L476.6 632.8 L482.3 633.3 L488 633.8 L493.8 634.3 L499.7 634.9 L505.6 635.4 L511.6 636 L517.6 636.6 L523.6 637.2 L529.7 637.8 L535.8 638.5 L541.8 639.1 L547.9 639.8 L554 640.5 L560.1 641.1 L566.1 641.8 L572.1 642.5 L578.1 643.2 L584 643.9 L589.9 644.6 L595.7 645.3 L601.4 646.1 L607.1 646.8 L612.7 647.5 L618.1 648.2 L623.5 648.9 L628.8 649.7 L634 650.5 L639 651.3 L643.9 652.1 L648.7 652.9 L653.4 653.6 L657.9 654.4 L662.2 655.2 L666.4 656 L670.5 656.8 L674.4 657.5 L678.1 658.3 L681.6 659 L684.9 659.8 L688.1 660.5 L691.1 661.2 L693.9 662 L696.5 662.7 L698.8 663.4 L701 664 L703 664.7 L704.8 665.4 L706.3 666 L707.7 666.7 L708.8 667.3 L709.8 667.9 L710.5 668.6 L710.9 669.2 L711.2 669.8 L711.2 670.7Z"/>
<path fill="#b9b900" d="M711.2 670.7 L711.2 669.8 L710.9 669.2 L710.5 668.6 L709.8 667.9 L708.8 667.3 L707.7 666.7 L706.3 666 L704.8 665.4 L703 664.7 L701 664 L698.8 663.4 L696.5 662.7 L693.9 662 L691.1 661.2 L688.1 660.5 L684.9 659.8 L681.6 659 L678.1 658.3 L674.4 657.5 L670.5 656.8 L666.4 656 L662.2 655.2 L657.9 654.4 L653.4 653.6 L648.7 652.9 L643.9 652.1 L639 651.3 L634 650.5 L628.8 649.7 L623.5 648.9 L618.1 648.2 L612.7 647.5 L607.1 646.8 L601.4 646.1 L595.7 645.3 L589.9 644.6 L584 643.9 L578.1 643.2 L572.1 642.5 L566.1 641.8 L560.1 641.1 L554 640.5 L547.9 639.8 L541.8 639.1 L535.8 638.5 L529.7 637.8 L523.6 637.2 L517.6 636.6 L511.6 636 L505.6 635.4 L499.7 634.9 L493.8 634.3 L488 633.8 L482.3 633.3 L476.6 632.8 L471 632.3 L465.5 631.8 L460.1 631.4 L454.8 631 L449.7 630.7 L444.6 630.4 L439.6 630.1 L434.8 629.9 L434.6 632 L439.4 632.3 L444.3 632.6 L449.4 633 L454.6 633.3 L459.9 633.7 L465.3 634.1 L470.8 634.6 L476.3 635.1 L482 635.6 L487.7 636.1 L493.5 636.6 L499.4 637.2 L505.3 637.7 L511.3 638.3 L517.3 638.9 L523.4 639.5 L529.4 640.2 L535.5 640.8 L541.6 641.4 L547.7 642.1 L553.8 642.8 L559.8 643.5 L565.9 644.1 L571.9 644.8 L577.8 645.5 L583.8 646.2 L589.6 647 L595.4 647.7 L601.2 648.4 L606.8 649.1 L612.4 649.8 L617.9 650.5 L623.3 651.3 L628.6 652 L633.7 652.7 L638.8 653.5 L643.7 654.2 L648.5 655 L653.1 655.7 L657.7 656.5 L662 657.2 L666.2 657.9 L670.3 658.6 L674.2 659.4 L677.9 660.1 L681.4 660.8 L684.8 661.4 L687.9 662.1 L690.9 662.8 L693.7 663.4 L696.3 664 L698.7 664.7 L700.9 665.3 L702.9 665.9 L704.7 666.4 L706.2 667 L707.6 667.5 L708.8 668.1 L709.7 668.6 L710.4 669.1 L710.9 669.6 L711.2 670.1 L711.2 670.7Z"/>
<path fill="#8c8c00" d="M711.2 670.7 L711.1 671.2 L710.7 671.3 L710.1 671.4 L710.2 670.8 L710.8 670.9 L711.1 670.9 L711.2 670.7Z"/>
<path fill="#a8a800" d="M710.1 671.4 L709.4 671.4 L708.4 671.4 L707.2 671.3 L705.8 671.1 L705.9 670.1 L707.3 670.3 L708.5 670.5 L709.5 670.7 L710.2 670.8Z"/>
<path fill="#c5c500" d="M705.8 671.1 L704.2 671 L702.4 670.8 L700.3 670.5 L698.1 670.3 L695.7 670 L695.8 668.4 L698.2 668.8 L700.5 669.2 L702.5 669.5 L704.3 669.8 L705.9 670.1Z"/>
<path fill="#e2e200" d="M695.7 670 L693 669.7 L690.2 669.4 L687.2 669 L684 668.6 L680.6 668.2 L680.8 666.3 L684.2 666.7 L687.4 667.2 L690.4 667.6 L693.2 668 L695.8 668.4Z"/>
<path fill="#ffff00" d="M680.6 668.2 L677 667.8 L673.3 667.3 L669.4 666.8 L665.3 666.4 L661.1 665.9 L656.7 665.3 L652.2 664.8 L647.5 664.2 L642.7 663.7 L637.7 663.1 L632.7 662.5 L627.5 661.9 L622.2 661.3 L616.8 660.5 L611.3 659.8 L605.7 659.1 L600.1 658.4 L594.3 657.7 L588.5 657 L582.7 656.2 L576.7 655.5 L570.8 654.8 L564.8 654.1 L558.7 653.5 L552.7 652.8 L546.6 652.1 L540.5 651.5 L534.4 650.8 L528.3 650.2 L522.3 649.5 L516.2 648.9 L510.2 648.3 L504.3 647.8 L498.3 647.2 L492.5 646.6 L486.7 646.1 L480.9 645.6 L475.2 645.1 L469.7 644.6 L464.2 644.2 L458.8 643.7 L453.5 643.2 L448.4 642.7 L443.3 642.2 L438.4 641.7 L433.6 641.2 L433.9 638.8 L438.7 639.3 L443.6 639.7 L448.6 640.1 L453.8 640.6 L459.1 641.1 L464.5 641.5 L470 642 L475.5 642.5 L481.2 643 L486.9 643.5 L492.7 644 L498.6 644.6 L504.5 645.1 L510.5 645.7 L516.5 646.3 L522.6 646.9 L528.6 647.6 L534.7 648.2 L540.8 648.8 L546.9 649.5 L552.9 650.2 L559 650.8 L565 651.5 L571.1 652.2 L577 652.9 L582.9 653.6 L588.8 654.3 L594.6 655.1 L600.4 655.8 L606 656.5 L611.6 657.2 L617.1 657.9 L622.5 658.6 L627.8 659.3 L632.9 660 L638 660.6 L642.9 661.2 L647.7 661.8 L652.4 662.4 L656.9 663 L661.3 663.6 L665.5 664.2 L669.6 664.7 L673.5 665.2 L677.2 665.8 L680.8 666.3Z"/>
<path fill="#8c8c00" d="M711.2 670.7 L711.1 670.9 L710.8 670.9 L710.2 670.8 L710.3 670.3 L710.8 670.5 L711.1 670.6 L711.2 670.7Z"/>
<path fill="#a8a800" d="M710.2 670.8 L709.5 670.7 L708.5 670.5 L707.3 670.3 L705.9 670.1 L706 669.1 L707.4 669.4 L708.6 669.7 L709.5 670 L710.3 670.3Z"/>
<path fill="#c5c500" d="M705.9 670.1 L704.3 669.8 L702.5 669.5 L700.5 669.2 L698.2 668.8 L695.8 668.4 L696 667.1 L698.4 667.5 L700.6 667.9 L702.6 668.4 L704.4 668.7 L706 669.1Z"/>
<path fill="#e2e200" d="M695.8 668.4 L693.2 668 L690.4 667.6 L687.4 667.2 L684.2 666.7 L680.8 666.3 L681 664.5 L684.4 665.1 L687.6 665.6 L690.6 666.1 L693.4 666.6 L696 667.1Z"/>
<path fill="#ffff00" d="M680.8 666.3 L677.2 665.8 L673.5 665.2 L669.6 664.7 L665.5 664.2 L661.3 663.6 L656.9 663 L652.4 662.4 L647.7 661.8 L642.9 661.2 L638 660.6 L632.9 660 L627.8 659.3 L622.5 658.6 L617.1 657.9 L611.6 657.2 L606 656.5 L600.4 655.8 L594.6 655.1 L588.8 654.3 L582.9 653.6 L577 652.9 L571.1 652.2 L565 651.5 L559 650.8 L552.9 650.2 L546.9 649.5 L540.8 648.8 L534.7 648.2 L528.6 647.6 L522.6 646.9 L516.5 646.3 L510.5 645.7 L504.5 645.1 L498.6 644.6 L492.7 644 L486.9 643.5 L481.2 643 L475.5 642.5 L470 642 L464.5 641.5 L459.1 641.1 L453.8 640.6 L448.6 640.1 L443.6 639.7 L438.7 639.3 L433.9 638.8 L434.1 636.7 L438.9 637.1 L443.8 637.5 L448.9 637.9 L454 638.3 L459.3 638.8 L464.7 639.2 L470.2 639.7 L475.8 640.2 L481.4 640.7 L487.2 641.2 L493 641.7 L498.9 642.3 L504.8 642.8 L510.8 643.4 L516.8 644 L522.8 644.6 L528.9 645.2 L534.9 645.9 L541 646.5 L547.1 647.2 L553.2 647.9 L559.3 648.5 L565.3 649.2 L571.3 649.9 L577.3 650.6 L583.2 651.3 L589.1 652 L594.9 652.7 L600.6 653.5 L606.3 654.2 L611.8 654.9 L617.3 655.6 L622.7 656.3 L628 657 L633.2 657.7 L638.2 658.4 L643.2 659 L648 659.7 L652.6 660.3 L657.2 661 L661.5 661.6 L665.8 662.2 L669.8 662.8 L673.7 663.4 L677.4 664 L681 664.5Z"/>
<path fill="#646400" d="M705.1 727 L705.1 725.9 L704.9 725.1 L704.4 724.3 L703.7 723.6 L702.9 722.8 L701.8 722.1 L700.5 721.4 L698.9 720.6 L697.2 719.9 L695.3 719.1 L693.2 718.3 L690.9 717.6 L688.4 716.8 L685.7 716 L682.8 715.2 L679.7 714.4 L676.4 713.6 L673 712.8 L669.4 712 L665.6 711.2 L661.7 710.4 L657.6 709.5 L653.3 708.7 L648.9 707.9 L644.4 707.1 L639.7 706.2 L634.9 705.4 L630 704.6 L624.9 703.8 L619.8 703 L614.5 702.3 L609.1 701.5 L603.6 700.8 L598.1 700.1 L592.5 699.4 L586.8 698.7 L581 698 L575.2 697.3 L569.3 696.6 L563.4 695.9 L557.5 695.2 L551.5 694.6 L545.5 693.9 L539.5 693.2 L533.5 692.6 L527.5 692 L521.5 691.3 L515.5 690.7 L509.6 690.1 L503.6 689.5 L497.8 689 L491.9 688.4 L486.2 687.9 L480.4 687.4 L474.8 686.9 L469.2 686.4 L463.7 685.9 L458.4 685.5 L453.1 685 L447.8 684.7 L442.8 684.5 L437.8 684.2 L432.9 684 L428.2 683.8 L427.9 686.2 L432.6 686.5 L437.5 686.7 L442.5 687 L447.6 687.3 L452.8 687.7 L458.1 688.1 L463.5 688.5 L468.9 689 L474.5 689.5 L480.2 690 L485.9 690.5 L491.6 691 L497.5 691.6 L503.3 692.2 L509.3 692.7 L515.2 693.3 L521.2 694 L527.2 694.6 L533.2 695.2 L539.2 695.9 L545.2 696.5 L551.2 697.2 L557.2 697.9 L563.1 698.5 L569 699.2 L574.9 699.9 L580.7 700.6 L586.5 701.3 L592.2 702 L597.8 702.7 L603.4 703.4 L608.8 704.2 L614.2 704.9 L619.5 705.6 L624.6 706.4 L629.7 707.1 L634.6 707.9 L639.4 708.7 L644.1 709.5 L648.7 710.2 L653.1 711 L657.3 711.8 L661.4 712.5 L665.4 713.3 L669.2 714.1 L672.8 714.8 L676.2 715.5 L679.5 716.3 L682.6 717 L685.5 717.7 L688.2 718.4 L690.7 719.1 L693 719.8 L695.2 720.5 L697.1 721.1 L698.8 721.8 L700.3 722.4 L701.7 723.1 L702.8 723.7 L703.7 724.3 L704.3 724.9 L704.8 725.6 L705.1 726.2 L705.1 727Z"/>
<path fill="#b9b900" d="M705.1 727 L705.1 726.2 L704.8 725.6 L704.3 724.9 L703.7 724.3 L702.8 723.7 L701.7 723.1 L700.3 722.4 L698.8 721.8 L697.1 721.1 L695.2 720.5 L693 719.8 L690.7 719.1 L688.2 718.4 L685.5 717.7 L682.6 717 L679.5 716.3 L676.2 715.5 L672.8 714.8 L669.2 714.1 L665.4 713.3 L661.4 712.5 L657.3 711.8 L653.1 711 L648.7 710.2 L644.1 709.5 L639.4 708.7 L634.6 707.9 L629.7 707.1 L624.6 706.4 L619.5 705.6 L614.2 704.9 L608.8 704.2 L603.4 703.4 L597.8 702.7 L592.2 702 L586.5 701.3 L580.7 700.6 L574.9 699.9 L569 699.2 L563.1 698.5 L557.2 697.9 L551.2 697.2 L545.2 696.5 L539.2 695.9 L533.2 695.2 L527.2 694.6 L521.2 694 L515.2 693.3 L509.3 692.7 L503.3 692.2 L497.5 691.6 L491.6 691 L485.9 690.5 L480.2 690 L474.5 689.5 L468.9 689 L463.5 688.5 L458.1 688.1 L452.8 687.7 L447.6 687.3 L442.5 687 L437.5 686.7 L432.6 686.5 L427.9 686.2 L427.7 688.3 L432.4 688.6 L437.3 688.9 L442.2 689.2 L447.3 689.6 L452.5 690 L457.8 690.4 L463.2 690.8 L468.7 691.3 L474.3 691.8 L479.9 692.3 L485.6 692.8 L491.4 693.4 L497.2 693.9 L503.1 694.5 L509 695.1 L515 695.7 L520.9 696.3 L526.9 696.9 L532.9 697.5 L538.9 698.2 L545 698.8 L550.9 699.5 L556.9 700.2 L562.9 700.9 L568.8 701.5 L574.6 702.2 L580.5 702.9 L586.2 703.6 L591.9 704.3 L597.5 705.1 L603.1 705.8 L608.6 706.5 L613.9 707.2 L619.2 707.9 L624.4 708.6 L629.4 709.4 L634.4 710.1 L639.2 710.9 L643.9 711.6 L648.4 712.3 L652.8 713 L657.1 713.8 L661.2 714.5 L665.2 715.2 L669 715.9 L672.6 716.6 L676 717.3 L679.3 717.9 L682.4 718.6 L685.3 719.2 L688 719.9 L690.6 720.5 L692.9 721.1 L695 721.7 L697 722.3 L698.7 722.8 L700.2 723.4 L701.6 723.9 L702.7 724.5 L703.6 725 L704.3 725.5 L704.8 726 L705 726.5 L705.1 727Z"/>
<path fill="#8c8c00" d="M705.1 727 L704.9 727.5 L704.6 727.7 L704 727.7 L704.1 727.2 L704.6 727.2 L704.9 727.2 L705.1 727Z"/>
<path fill="#a8a800" d="M704 727.7 L703.3 727.8 L702.3 727.7 L701.2 727.6 L699.8 727.5 L699.9 726.4 L701.3 726.7 L702.4 726.9 L703.4 727 L704.1 727.2Z"/>
<path fill="#c5c500" d="M699.8 727.5 L698.2 727.3 L696.4 727.2 L694.5 726.9 L692.3 726.7 L689.9 726.4 L690.1 724.9 L692.4 725.2 L694.6 725.6 L696.6 725.9 L698.3 726.2 L699.9 726.4Z"/>
<path fill="#e2e200" d="M689.9 726.4 L687.3 726.1 L684.6 725.8 L681.6 725.4 L678.5 725 L675.2 724.6 L675.4 722.7 L678.7 723.2 L681.8 723.6 L684.8 724.1 L687.5 724.5 L690.1 724.9Z"/>
<path fill="#ffff00" d="M675.2 724.6 L671.7 724.2 L668.1 723.8 L664.3 723.3 L660.3 722.8 L656.2 722.4 L651.9 721.8 L647.5 721.3 L642.9 720.8 L638.2 720.2 L633.3 719.7 L628.4 719.1 L623.3 718.5 L618.1 717.9 L612.9 717.2 L607.5 716.5 L602 715.8 L596.5 715.1 L590.8 714.3 L585.1 713.6 L579.4 712.9 L573.5 712.2 L567.7 711.5 L561.8 710.9 L555.8 710.2 L549.9 709.5 L543.9 708.8 L537.9 708.2 L531.9 707.5 L525.8 706.9 L519.9 706.3 L513.9 705.7 L507.9 705.1 L502 704.5 L496.1 703.9 L490.3 703.4 L484.5 702.8 L478.8 702.3 L473.2 701.8 L467.6 701.3 L462.1 700.8 L456.7 700.4 L451.4 700 L446.2 699.4 L441.2 698.9 L436.2 698.4 L431.4 698 L426.7 697.5 L427 695.1 L431.7 695.5 L436.5 696 L441.5 696.4 L446.5 696.9 L451.7 697.3 L457 697.8 L462.4 698.2 L467.9 698.7 L473.5 699.2 L479.1 699.7 L484.8 700.2 L490.6 700.7 L496.4 701.3 L502.3 701.9 L508.2 702.5 L514.2 703.1 L520.1 703.7 L526.1 704.3 L532.1 704.9 L538.1 705.6 L544.1 706.2 L550.1 706.9 L556.1 707.6 L562.1 708.2 L568 708.9 L573.8 709.6 L579.7 710.3 L585.4 711 L591.1 711.7 L596.7 712.4 L602.3 713.2 L607.8 713.9 L613.1 714.6 L618.4 715.3 L623.6 715.9 L628.7 716.5 L633.6 717.2 L638.4 717.8 L643.1 718.4 L647.7 719 L652.1 719.5 L656.4 720.1 L660.5 720.7 L664.5 721.2 L668.3 721.7 L672 722.2 L675.4 722.7Z"/>
<path fill="#8c8c00" d="M705.1 727 L704.9 727.2 L704.6 727.2 L704.1 727.2 L704.2 726.6 L704.7 726.8 L705 727 L705.1 727Z"/>
<path fill="#a8a800" d="M704.1 727.2 L703.4 727 L702.4 726.9 L701.3 726.7 L699.9 726.4 L700 725.5 L701.4 725.8 L702.5 726.1 L703.4 726.4 L704.2 726.6Z"/>
<path fill="#c5c500" d="M699.9 726.4 L698.3 726.2 L696.6 725.9 L694.6 725.6 L692.4 725.2 L690.1 724.9 L690.2 723.5 L692.6 723.9 L694.7 724.4 L696.7 724.7 L698.5 725.1 L700 725.5Z"/>
<path fill="#e2e200" d="M690.1 724.9 L687.5 724.5 L684.8 724.1 L681.8 723.6 L678.7 723.2 L675.4 722.7 L675.6 721 L678.9 721.5 L682 722 L684.9 722.5 L687.7 723 L690.2 723.5Z"/>
<path fill="#ffff00" d="M675.4 722.7 L672 722.2 L668.3 721.7 L664.5 721.2 L660.5 720.7 L656.4 720.1 L652.1 719.5 L647.7 719 L643.1 718.4 L638.4 717.8 L633.6 717.2 L628.7 716.5 L623.6 715.9 L618.4 715.3 L613.1 714.6 L607.8 713.9 L602.3 713.2 L596.7 712.4 L591.1 711.7 L585.4 711 L579.7 710.3 L573.8 709.6 L568 708.9 L562.1 708.2 L556.1 707.6 L550.1 706.9 L544.1 706.2 L538.1 705.6 L532.1 704.9 L526.1 704.3 L520.1 703.7 L514.2 703.1 L508.2 702.5 L502.3 701.9 L496.4 701.3 L490.6 700.7 L484.8 700.2 L479.1 699.7 L473.5 699.2 L467.9 698.7 L462.4 698.2 L457 697.8 L451.7 697.3 L446.5 696.9 L441.5 696.4 L436.5 696 L431.7 695.5 L427 695.1 L427.2 693 L431.9 693.4 L436.7 693.8 L441.7 694.2 L446.8 694.6 L452 695 L457.3 695.5 L462.7 695.9 L468.1 696.4 L473.7 696.9 L479.3 697.4 L485.1 697.9 L490.8 698.4 L496.7 699 L502.5 699.6 L508.5 700.1 L514.4 700.7 L520.4 701.3 L526.4 702 L532.4 702.6 L538.4 703.3 L544.4 703.9 L550.4 704.6 L556.4 705.2 L562.3 705.9 L568.2 706.6 L574.1 707.3 L579.9 708 L585.7 708.7 L591.4 709.4 L597 710.1 L602.5 710.8 L608 711.5 L613.4 712.3 L618.7 713 L623.8 713.6 L628.9 714.3 L633.9 715 L638.7 715.6 L643.4 716.3 L647.9 716.9 L652.4 717.5 L656.6 718.1 L660.8 718.7 L664.7 719.3 L668.5 719.9 L672.2 720.5 L675.6 721Z"/>
<path fill="none" stroke="#ffff00" stroke-width="1" d="M377.1 673.5 L378.3 670.8 L379.4 667.8 L380.5 664.8 L381.5 661.5 L382.4 658.1 L383.2 654.7 L383.9 651.1 L384.5 647.5 L385 643.8 L385.6 637.8 L386.3 631.7 L386.9 625.7 L387.6 619.6 L388.3 613.5 L388.9 607.5 L389.6 601.4 L390.2 595.4 L390.9 589.3 L391.6 583.3 L392.2 577.2 L392.9 571.1 L393.5 565.1 L394.2 559 L394.9 553 L395.5 546.9 L396.2 540.9 L396.8 534.8 L397.5 528.8 L398.2 522.7 L398.8 516.6 L399.5 510.6 L400.1 504.5 L400.8 498.5 L401.5 492.4 L402.1 486.4 L402.8 480.3 L403.4 474.2 L404.1 468.2 L404.8 462.1 L405.4 456.1 L406.1 450 L406.7 444 L407.4 437.9 L408.1 431.8 L408.7 425.8 L409.4 419.7 L410 413.7 L410.7 407.6 L411.4 401.6 L412 395.5 L412.7 389.4 L413.3 383.4 L414 377.3 L414.7 371.3 L415.3 365.2 L416 359.2 L416.6 353.1 L417.3 347 L418 341 L418.6 334.9 L419.3 328.9 L419.9 322.8 L420.6 316.8 L421.3 310.7 L421.9 304.6 L422.6 298.6 L423.2 292.5 L423.9 286.5 L424.6 280.4 L425.2 274.4 L425.9 268.3 L426.5 262.3 L427.2 256.2 L427.9 250.1"/>
<path fill="none" stroke="#ff0f3c" stroke-width="5.2" stroke-linejoin="round"  d="M414.3 238.8 L414.5 239.3 L415.1 239.8 L416.3 240.4 L417.9 241 L420 241.6 L422.6 242.4 L425.6 243.1 L429.1 243.9 L433 244.7 L437.4 245.6 L442.1 246.5 L447.3 247.4 L452.8 248.3 L458.8 249.3 L465 250.3 L471.6 251.3 L478.6 252.3 L485.8 253.4 L493.3 254.5 L501.1 255.5 L509.1 256.6 L517.3 257.7 L525.8 258.7 L534.3 259.8 L543.1 260.8 L551.9 261.9 L560.8 262.9 L569.8 263.9 L578.8 264.9 L587.9 265.9 L596.9 266.9 L605.9 267.8 L614.9 268.7 L623.7 269.5 L632.5 270.4 L641.1 271.1 L649.5 271.9 L657.8 272.6 L665.9 273.2 L673.7 273.9 L681.3 274.4 L688.5 275 L695.5 275.4 L702.2 275.8 L708.6 276.2 L714.6 276.5 L720.2 276.8 L725.4 277 L730.3 277.1 L734.7 277.2 L738.7 277.2 L742.3 277.2 L745.4 277.1 L748 277 L750.2 276.8 L752 276.5 L753.2 276.2 L754 275.8 L754.3 275.4"/>
<path fill="none" stroke="#ff0f3c" stroke-width="5.2" stroke-linejoin="round"  d="M380.3 550.4 L380.5 550.9 L381.2 551.4 L382.3 552 L384 552.6 L386.1 553.3 L388.6 554 L391.7 554.7 L395.1 555.5 L399.1 556.3 L403.4 557.2 L408.2 558.1 L413.3 559 L418.9 560 L424.8 560.9 L431.1 561.9 L437.7 562.9 L444.6 564 L451.9 565 L459.4 566.1 L467.2 567.1 L475.2 568.2 L483.4 569.3 L491.8 570.3 L500.4 571.4 L509.1 572.5 L517.9 573.5 L526.9 574.5 L535.9 575.6 L544.9 576.6 L554 577.5 L563 578.5 L572 579.4 L580.9 580.3 L589.8 581.1 L598.5 582 L607.2 582.8 L615.6 583.5 L623.9 584.2 L631.9 584.9 L639.7 585.5 L647.3 586.1 L654.6 586.6 L661.6 587 L668.3 587.5 L674.6 587.8 L680.6 588.1 L686.3 588.4 L691.5 588.6 L696.3 588.7 L700.8 588.8 L704.8 588.8 L708.3 588.8 L711.4 588.7 L714.1 588.6 L716.3 588.4 L718 588.1 L719.3 587.8 L720 587.5 L720.3 587"/>
<path fill="none" stroke="#ff0f3c" stroke-width="5.2" stroke-linejoin="round"  d="M371.2 634.1 L371.4 634.5 L372.1 635.1 L373.2 635.6 L374.9 636.2 L377 636.9 L379.5 637.6 L382.6 638.4 L386 639.1 L390 640 L394.3 640.8 L399.1 641.7 L404.2 642.6 L409.8 643.6 L415.7 644.6 L422 645.6 L428.6 646.6 L435.5 647.6 L442.8 648.6 L450.3 649.7 L458.1 650.8 L466.1 651.8 L474.3 652.9 L482.7 654 L491.3 655 L500 656.1 L508.8 657.1 L517.8 658.2 L526.8 659.2 L535.8 660.2 L544.8 661.2 L553.9 662.1 L562.9 663 L571.8 663.9 L580.7 664.8 L589.4 665.6 L598 666.4 L606.5 667.1 L614.8 667.8 L622.8 668.5 L630.6 669.1 L638.2 669.7 L645.5 670.2 L652.5 670.7 L659.2 671.1 L665.5 671.5 L671.5 671.8 L677.1 672 L682.4 672.2 L687.2 672.4 L691.7 672.4 L695.7 672.5 L699.2 672.4 L702.3 672.4 L705 672.2 L707.2 672 L708.9 671.8 L710.2 671.5 L710.9 671.1 L711.2 670.7"/>
<path fill="none" stroke="#ff0f3c" stroke-width="5.2" stroke-linejoin="round"  d="M365.1 690.4 L365.3 690.9 L365.9 691.4 L367.1 692 L368.7 692.6 L370.8 693.3 L373.4 694 L376.4 694.7 L379.9 695.5 L383.8 696.3 L388.2 697.2 L392.9 698.1 L398.1 699 L403.6 699.9 L409.6 700.9 L415.8 701.9 L422.5 702.9 L429.4 704 L436.6 705 L444.1 706.1 L451.9 707.1 L459.9 708.2 L468.2 709.3 L476.6 710.3 L485.1 711.4 L493.9 712.4 L502.7 713.5 L511.6 714.5 L520.6 715.5 L529.7 716.5 L538.7 717.5 L547.7 718.5 L556.8 719.4 L565.7 720.3 L574.6 721.1 L583.3 722 L591.9 722.7 L600.4 723.5 L608.6 724.2 L616.7 724.9 L624.5 725.5 L632.1 726 L639.4 726.6 L646.3 727 L653 727.4 L659.4 727.8 L665.4 728.1 L671 728.4 L676.2 728.6 L681.1 728.7 L685.5 728.8 L689.5 728.8 L693.1 728.8 L696.2 728.7 L698.9 728.6 L701 728.4 L702.8 728.1 L704 727.8 L704.8 727.4 L705.1 727"/>
<path fill="none" stroke="#ff0f3c" stroke-width="5.2" stroke-linejoin="round"  d="M365.1 690.4 L365.3 690.1 L365.8 689.8 L366.6 689.5 L367.2 689.2 L367.8 688.6 L368.6 687.7 L369.4 686.6 L370.4 685.1 L371.3 683.3 L372.4 681.3 L373.4 679 L374.5 676.5 L375.6 673.8 L376.6 670.9 L377.6 667.8 L378.5 664.5 L379.4 661.2 L380.2 657.7 L380.9 654.1 L381.4 650.5 L381.9 646.8 L382.6 640.8 L383.2 634.7 L383.9 628.7 L384.5 622.6 L385.2 616.6 L385.9 610.5 L386.5 604.4 L387.2 598.4 L387.8 592.3 L388.5 586.3 L389.2 580.2 L389.8 574.2 L390.5 568.1 L391.1 562 L391.8 556 L392.5 549.9 L393.1 543.9 L393.8 537.8 L394.4 531.8 L395.1 525.7 L395.8 519.6 L396.4 513.6 L397.1 507.5 L397.7 501.5 L398.4 495.4 L399.1 489.4 L399.7 483.3 L400.4 477.2 L401 471.2 L401.7 465.1 L402.4 459.1 L403 453 L403.7 447 L404.3 440.9 L405 434.9 L405.6 428.8 L406.3 422.7 L407 416.7 L407.6 410.6 L408.3 404.6 L408.9 398.5 L409.6 392.5 L410.3 386.4 L410.9 380.3 L411.6 374.3 L412.2 368.2 L412.9 362.2 L413.6 356.1 L414.2 350.1 L414.9 344 L415.5 337.9 L416.2 331.9 L416.9 325.8 L417.5 319.8 L418.2 313.7 L418.8 307.7 L419.5 301.6 L420.2 295.5 L420.8 289.5 L421.5 283.4 L422.1 277.4 L422.8 271.3 L423.5 265.3 L424.1 259.2 L424.8 253.1 L425.4 247.1 L426.1 241"/>
<path fill="none" stroke="#ff0f3c" stroke-width="5.2" stroke-linejoin="round"  d="M380.3 550.4 L379.9 554.8 L379.4 559.2 L378.9 563.6 L378.4 568 L377.9 572.4 L377.5 576.8 L377 581.2 L376.5 585.6 L376 590 L375.5 594.4 L375.1 598.8 L374.6 603.2 L374.1 607.6 L373.6 612 L373.1 616.4 L372.7 620.8 L372.2 625.2 L371.7 629.6 L371.2 634"/>
<path fill="#ff0f3c" d="M754.3 275.4 L754.2 274.9 L754 274.4 L753.5 273.9 L752.8 273.4 L751.8 272.9 L750.7 272.4 L749.4 271.8 L747.8 271.3 L746.1 270.7 L744.1 270.2 L742 269.6 L739.6 269 L737.1 268.3 L734.3 267.7 L731.4 267.1 L728.3 266.4 L725 265.7 L721.5 265 L717.8 264.4 L714 263.7 L710 263 L705.9 262.2 L701.6 261.5 L697.1 260.8 L692.6 260.1 L687.8 259.3 L683 258.6 L678 257.8 L672.9 257.1 L667.7 256.4 L662.4 255.7 L657 254.9 L651.5 254.2 L645.9 253.5 L640.2 252.8 L634.5 252.1 L628.7 251.4 L622.8 250.7 L616.9 250 L611 249.3 L605 248.6 L599 247.9 L593 247.3 L587 246.6 L580.9 246 L574.9 245.3 L568.9 244.7 L562.9 244.1 L556.9 243.5 L551 242.9 L545.1 242.4 L539.3 241.8 L533.5 241.3 L527.7 240.7 L522.1 240.2 L516.5 239.8 L511 239.3 L505.6 238.8 L500.3 238.3 L496.9 238.3 L493.5 238.8 L490.2 239.9 L487 241.4 L484.1 243.5 L481.4 245.9 L479 248.8 L476.9 251.9 L475.2 255.4 L473.8 259.1 L472.8 262.9 L472.2 266.8 L471.4 273.8 L470.7 280.7 L469.9 287.8 L469.7 291.8 L469.9 295.8 L470.5 299.7 L471.5 303.5 L473 306.9 L474.9 310.1 L477.3 312.7 L480 314.8 L482.9 316.6 L487.5 319.1 L492.2 321.7 L497 324.2 L501.8 326.7 L506.8 329.3 L511.8 331.8 L516.9 334.4 L522.1 337 L527.4 339.6 L532.6 342.3 L538 344.9 L543.3 347.6 L548.7 350.3 L554.2 353 L559.6 355.7 L565.1 358.4 L570.6 361.1 L576 363.8 L581.5 366.5 L587 369.3 L592.4 372.1 L597.8 374.8 L603.2 377.6 L608.6 380.4 L613.9 383.1 L619.1 385.9 L624.3 388.7 L629.5 391.5 L634.6 394.3 L639.6 397.1 L644.5 399.8 L649.3 402.6 L654.1 405.4 L658.7 408.2 L663.3 410.9 L667.7 413.7 L672.1 416.4 L676.3 419.2 L680.4 421.9 L684.3 424.6 L686.4 426.3 L688.2 428.4 L689.8 430.7 L691.2 433.2 L692.4 435.9 L693.4 438.7 L694.3 441.7 L694.9 444.8 L695.2 448 L695.4 451.3 L695.3 454.6 L695 457.8 L694.5 461.1 L693.8 464.3 L692.8 467.3 L691.7 470.2 L690.4 472.9 L688.9 475.4 L687.2 477.7 L685.3 479.7 L683.3 481.5 L681.2 482.9 L678.9 484 L676.6 484.8 L674.2 485.2 L671.7 485.3 L669.2 485.1 L664.5 484.5 L659.6 483.8 L654.6 483 L649.5 482.3 L644.3 481.5 L639 480.8 L633.6 480.1 L628 479.4 L622.4 478.6 L616.7 477.9 L611 477.2 L605.1 476.5 L599.2 475.8 L593.3 475.1 L587.3 474.4 L581.3 473.7 L575.3 473 L569.2 472.4 L563.1 471.7 L557 471 L551 470.4 L544.9 469.8 L538.9 469.2 L532.9 468.6 L526.9 468 L520.9 467.4 L515 466.8 L509.2 466.3 L503.4 465.8 L497.8 465.3 L492.1 464.8 L486.6 464.3 L481.2 463.9 L475.8 463.3 L472.4 463.3 L469 463.8 L465.7 464.9 L462.5 466.4 L459.6 468.5 L456.9 470.9 L454.5 473.8 L452.4 476.9 L450.7 480.4 L449.3 484.1 L448.3 487.9 L447.7 491.8 L447 498 L446.3 504.2 L445.6 510.4 L445 516.5 L444.3 522.8 L444.1 526.7 L444.2 530.6 L444.8 534.4 L445.8 538 L447.1 541.5 L448.9 544.6 L451.2 547.2 L453.7 549.4 L456.5 551.2 L459.4 552.7 L462.6 554 L465.8 554.7 L471.2 555.2 L476.6 555.6 L482.1 556.1 L487.6 556.6 L493.3 557.1 L499 557.6 L504.8 558.2 L510.6 558.7 L516.5 559.3 L522.5 559.9 L528.4 560.5 L534.4 561.1 L540.5 561.7 L546.5 562.3 L552.5 563 L558.5 563.6 L564.6 564.3 L570.6 565 L576.5 565.7 L582.5 566.3 L588.4 567 L594.2 567.7 L600 568.5 L605.8 569.2 L611.4 569.9 L617 570.6 L622.5 571.3 L627.9 572 L633.3 572.7 L638.5 573.4 L643.6 574.1 L648.5 574.7 L653.4 575.4 L658.1 576 L662.7 576.7 L667.2 577.3 L671.5 577.9 L675.6 578.5 L679.6 579.1 L683.5 579.7 L687.1 580.3 L690.6 580.9 L693.9 581.4 L697.1 581.9 L700 582.4 L702.8 582.9 L705.4 583.4 L707.7 583.8 L709.9 584.3 L711.9 584.7 L713.7 585.1 L715.2 585.4 L716.6 585.8 L717.7 586.1 L718.7 586.3 L719.4 586.6 L719.9 586.8 L720.2 587 L720.3 587 L720.3 587 L720.3 586.5 L720 586 L719.5 585.5 L718.8 585 L717.9 584.5 L716.8 584 L715.4 583.5 L713.9 582.9 L712.1 582.4 L710.2 581.8 L708 581.2 L705.7 580.6 L703.1 580 L700.4 579.3 L697.4 578.7 L694.3 578 L691 577.4 L687.5 576.7 L683.9 576 L680.1 575.3 L676.1 574.6 L671.9 573.9 L667.6 573.1 L663.2 572.4 L658.6 571.7 L653.9 570.9 L649 570.2 L644.1 569.5 L639 568.7 L633.8 568 L628.5 567.3 L623 566.6 L617.5 565.8 L612 565.1 L606.3 564.4 L600.6 563.7 L594.8 563 L588.9 562.3 L583 561.6 L577.1 560.9 L571.1 560.2 L565.1 559.6 L559.1 558.9 L553 558.2 L547 557.6 L541 557 L535 556.3 L529 555.7 L523 555.1 L517 554.5 L511.2 554 L505.3 553.4 L499.5 552.9 L493.8 552.4 L488.2 551.9 L482.6 551.4 L477.1 550.9 L471.7 550.5 L466.4 550.1 L463.5 549.9 L460.6 549.2 L458 548 L455.7 546.2 L453.7 543.9 L452 541.4 L450.5 538.8 L449.3 535.9 L448.4 532.8 L447.9 529.6 L447.7 526.3 L447.9 522.9 L448.6 516.8 L449.3 510.6 L450 504.4 L450.6 498.3 L451.3 492.2 L451.8 488.8 L452.7 485.5 L453.9 482.4 L455.4 479.5 L457.2 476.9 L459.3 474.5 L461.6 472.5 L464.1 470.8 L466.8 469.5 L469.5 468.7 L472.4 468.3 L475.4 468.3 L480.7 468.6 L486.1 469 L491.6 469.5 L497.2 470 L502.9 470.5 L508.7 471 L514.5 471.6 L520.4 472.1 L526.4 472.7 L532.3 473.3 L538.4 473.9 L544.4 474.5 L550.5 475.1 L556.5 475.8 L562.6 476.4 L568.7 477.1 L574.7 477.8 L580.8 478.4 L586.8 479.1 L592.8 479.8 L598.7 480.5 L604.6 481.2 L610.4 482 L616.2 482.7 L621.9 483.4 L627.5 484.1 L633 484.8 L638.5 485.5 L643.8 486.3 L649 486.9 L654.1 487.6 L659.1 488.3 L664 488.9 L668.7 489.7 L671.6 489.9 L674.4 489.8 L677.1 489.2 L679.8 488.2 L682.3 486.9 L684.7 485.2 L686.9 483.2 L688.9 480.9 L690.8 478.3 L692.4 475.4 L693.9 472.3 L695.1 469 L696.1 465.6 L696.9 462 L697.5 458.4 L697.9 454.7 L698 450.9 L697.8 447.2 L697.4 443.6 L696.8 440.1 L695.9 436.7 L694.8 433.5 L693.4 430.6 L691.7 427.9 L689.8 425.6 L687.7 423.5 L685.5 421.8 L681.6 419 L677.5 416.2 L673.4 413.4 L669.1 410.6 L664.7 407.8 L660.2 405 L655.5 402.2 L650.8 399.4 L646 396.6 L641.1 393.8 L636.1 391 L631.1 388.2 L625.9 385.4 L620.7 382.6 L615.5 379.9 L610.2 377.1 L604.8 374.3 L599.5 371.5 L594.1 368.8 L588.6 366 L583.2 363.3 L577.7 360.5 L572.2 357.8 L566.7 355.1 L561.3 352.4 L555.8 349.7 L550.4 347 L545 344.3 L539.6 341.6 L534.3 339 L529 336.3 L523.7 333.7 L518.5 331.1 L513.4 328.5 L508.3 325.9 L503.4 323.4 L498.5 320.8 L493.7 318.3 L488.9 315.8 L484.3 313.4 L481.8 311.6 L479.7 309.4 L477.9 306.9 L476.3 304.2 L475 301.3 L474.1 298.1 L473.5 294.8 L473.3 291.4 L473.5 287.9 L474.3 281 L475 274 L475.8 267.1 L476.3 263.8 L477.2 260.5 L478.4 257.4 L479.9 254.5 L481.7 251.9 L483.8 249.5 L486.1 247.5 L488.6 245.8 L491.3 244.5 L494.1 243.7 L496.9 243.3 L499.9 243.3 L505.1 243.6 L510.5 244 L516 244.5 L521.6 245 L527.2 245.5 L533 246 L538.7 246.5 L544.6 247.1 L550.5 247.7 L556.4 248.2 L562.4 248.8 L568.4 249.4 L574.4 250.1 L580.4 250.7 L586.5 251.4 L592.5 252 L598.5 252.7 L604.5 253.4 L610.5 254 L616.4 254.7 L622.3 255.4 L628.2 256.1 L634 256.8 L639.7 257.5 L645.4 258.2 L651 259 L656.5 259.7 L661.9 260.4 L667.2 261.1 L672.4 261.8 L677.5 262.4 L682.5 263.1 L687.4 263.8 L692.1 264.4 L696.7 265.1 L701.1 265.7 L705.4 266.3 L709.6 266.9 L713.6 267.5 L717.4 268.1 L721.1 268.7 L724.6 269.2 L727.9 269.8 L731 270.3 L734 270.8 L736.7 271.3 L739.3 271.8 L741.7 272.2 L743.9 272.6 L745.8 273 L747.6 273.4 L749.2 273.8 L750.5 274.1 L751.7 274.4 L752.6 274.7 L753.3 275 L753.9 275.2 L754.2 275.4 L754.3 275.4Z"/>
<path fill="#ff0f3c" d="M711.2 670.7 L711.2 670.1 L710.9 669.6 L710.4 669.1 L709.7 668.6 L708.8 668.1 L707.6 667.5 L706.2 667 L704.7 666.4 L702.9 665.9 L700.9 665.3 L698.7 664.7 L696.3 664 L693.7 663.4 L690.9 662.8 L687.9 662.1 L684.8 661.4 L681.4 660.8 L677.9 660.1 L674.2 659.4 L670.3 658.6 L666.2 657.9 L662 657.2 L657.7 656.5 L653.1 655.7 L648.5 655 L643.7 654.2 L638.8 653.5 L633.7 652.7 L628.6 652 L623.3 651.3 L617.9 650.5 L612.4 649.8 L606.8 649.1 L601.2 648.4 L595.4 647.7 L589.6 647 L583.8 646.2 L577.8 645.5 L571.9 644.8 L565.9 644.1 L559.8 643.5 L553.8 642.8 L547.7 642.1 L541.6 641.4 L535.5 640.8 L529.4 640.2 L523.4 639.5 L517.3 638.9 L511.3 638.3 L505.3 637.7 L499.4 637.2 L493.5 636.6 L487.7 636.1 L482 635.6 L476.3 635.1 L470.8 634.6 L465.3 634.1 L459.9 633.7 L454.6 633.3 L449.4 633 L444.3 632.6 L439.4 632.3 L434.6 632 L434.1 636.7 L438.9 637.1 L443.8 637.5 L448.9 637.9 L454 638.3 L459.3 638.8 L464.7 639.2 L470.2 639.7 L475.8 640.2 L481.4 640.7 L487.2 641.2 L493 641.7 L498.9 642.3 L504.8 642.8 L510.8 643.4 L516.8 644 L522.8 644.6 L528.9 645.2 L534.9 645.9 L541 646.5 L547.1 647.2 L553.2 647.9 L559.3 648.5 L565.3 649.2 L571.3 649.9 L577.3 650.6 L583.2 651.3 L589.1 652 L594.9 652.7 L600.6 653.5 L606.3 654.2 L611.8 654.9 L617.3 655.6 L622.7 656.3 L628 657 L633.2 657.7 L638.2 658.4 L643.2 659 L648 659.7 L652.6 660.3 L657.2 661 L661.5 661.6 L665.8 662.2 L669.8 662.8 L673.7 663.4 L677.4 664 L681 664.5 L684.4 665.1 L687.6 665.6 L690.6 666.1 L693.4 666.6 L696 667.1 L698.4 667.5 L700.6 667.9 L702.6 668.4 L704.4 668.7 L706 669.1 L707.4 669.4 L708.6 669.7 L709.5 670 L710.3 670.3 L710.8 670.5 L711.1 670.6 L711.2 670.7Z"/>
<path fill="#ff0f3c" d="M705.1 727 L705 726.5 L704.8 726 L704.3 725.5 L703.6 725 L702.7 724.5 L701.6 723.9 L700.2 723.4 L698.7 722.8 L697 722.3 L695 721.7 L692.9 721.1 L690.6 720.5 L688 719.9 L685.3 719.2 L682.4 718.6 L679.3 717.9 L676 717.3 L672.6 716.6 L669 715.9 L665.2 715.2 L661.2 714.5 L657.1 713.8 L652.8 713 L648.4 712.3 L643.9 711.6 L639.2 710.9 L634.4 710.1 L629.4 709.4 L624.4 708.6 L619.2 707.9 L613.9 707.2 L608.6 706.5 L603.1 705.8 L597.5 705.1 L591.9 704.3 L586.2 703.6 L580.5 702.9 L574.6 702.2 L568.8 701.5 L562.9 700.9 L556.9 700.2 L550.9 699.5 L545 698.8 L538.9 698.2 L532.9 697.5 L526.9 696.9 L520.9 696.3 L515 695.7 L509 695.1 L503.1 694.5 L497.2 693.9 L491.4 693.4 L485.6 692.8 L479.9 692.3 L474.3 691.8 L468.7 691.3 L463.2 690.8 L457.8 690.4 L452.5 690 L447.3 689.6 L442.2 689.2 L437.3 688.9 L432.4 688.6 L427.7 688.3 L427.2 693 L431.9 693.4 L436.7 693.8 L441.7 694.2 L446.8 694.6 L452 695 L457.3 695.5 L462.7 695.9 L468.1 696.4 L473.7 696.9 L479.3 697.4 L485.1 697.9 L490.8 698.4 L496.7 699 L502.5 699.6 L508.5 700.1 L514.4 700.7 L520.4 701.3 L526.4 702 L532.4 702.6 L538.4 703.3 L544.4 703.9 L550.4 704.6 L556.4 705.2 L562.3 705.9 L568.2 706.6 L574.1 707.3 L579.9 708 L585.7 708.7 L591.4 709.4 L597 710.1 L602.5 710.8 L608 711.5 L613.4 712.3 L618.7 713 L623.8 713.6 L628.9 714.3 L633.9 715 L638.7 715.6 L643.4 716.3 L647.9 716.9 L652.4 717.5 L656.6 718.1 L660.8 718.7 L664.7 719.3 L668.5 719.9 L672.2 720.5 L675.6 721 L678.9 721.5 L682 722 L684.9 722.5 L687.7 723 L690.2 723.5 L692.6 723.9 L694.7 724.4 L696.7 724.7 L698.5 725.1 L700 725.5 L701.4 725.8 L702.5 726.1 L703.4 726.4 L704.2 726.6 L704.7 726.8 L705 727 L705.1 727Z"/>
<path fill="none" stroke="#ff0f3c" stroke-width="4" stroke-linejoin="round"  d="M754.3 275.4 L754.2 275.1 L753.9 274.8 L753.4 274.4 L752.7 274.1 L751.8 273.7 L750.6 273.3 L749.3 272.8 L747.7 272.4 L746 271.9 L744 271.4 L741.8 270.9 L739.5 270.4 L736.9 269.8 L734.1 269.3 L731.2 268.7 L728.1 268.1 L724.8 267.5 L721.3 266.9 L717.6 266.2 L713.8 265.6 L709.8 264.9 L705.7 264.3 L701.4 263.6 L696.9 262.9 L692.3 262.2 L687.6 261.5 L682.7 260.9 L677.8 260.1 L672.7 259.4 L667.5 258.7 L662.1 258 L656.7 257.3 L651.2 256.6 L645.6 255.9 L640 255.2 L634.2 254.5 L628.4 253.8 L622.6 253.1 L616.7 252.4 L610.7 251.7 L604.8 251 L598.8 250.3 L592.7 249.6 L586.7 249 L580.7 248.3 L574.7 247.7 L568.6 247.1 L562.6 246.5 L556.7 245.9 L550.7 245.3 L544.8 244.7 L539 244.2 L533.2 243.6 L527.5 243.1 L521.8 242.6 L516.3 242.1 L510.8 241.7 L505.4 241.2 L500.1 240.8 L496.9 240.8 L493.8 241.3 L490.7 242.2 L487.8 243.6 L485.1 245.5 L482.6 247.7 L480.4 250.3 L478.4 253.2 L476.8 256.4 L475.5 259.8 L474.6 263.3 L474 267 L473.2 273.9 L472.5 280.9 L471.7 287.8 L471.5 291.6 L471.7 295.3 L472.3 298.9 L473.3 302.4 L474.6 305.6 L476.4 308.5 L478.5 311.1 L480.9 313.2 L483.6 315 L488.2 317.5 L492.9 320 L497.7 322.5 L502.6 325 L507.6 327.6 L512.6 330.2 L517.7 332.8 L522.9 335.4 L528.2 338 L533.4 340.6 L538.8 343.3 L544.2 345.9 L549.6 348.6 L555 351.3 L560.4 354 L565.9 356.7 L571.4 359.4 L576.9 362.2 L582.3 364.9 L587.8 367.7 L593.2 370.4 L598.7 373.2 L604 375.9 L609.4 378.7 L614.7 381.5 L619.9 384.3 L625.1 387.1 L630.3 389.8 L635.3 392.6 L640.3 395.4 L645.2 398.2 L650.1 401 L654.8 403.8 L659.4 406.6 L664 409.3 L668.4 412.1 L672.7 414.9 L676.9 417.7 L681 420.4 L684.9 423.2 L687.1 424.9 L689 427 L690.8 429.3 L692.3 431.9 L693.6 434.7 L694.7 437.7 L695.5 440.9 L696.2 444.2 L696.5 447.6 L696.7 451.1 L696.6 454.6 L696.3 458.1 L695.7 461.6 L695 464.9 L694 468.2 L692.8 471.3 L691.4 474.2 L689.8 476.9 L688.1 479.3 L686.1 481.5 L684 483.3 L681.7 484.9 L679.4 486.1 L676.9 487 L674.3 487.5 L671.6 487.6 L669 487.4 L664.2 486.7 L659.4 486 L654.4 485.3 L649.3 484.6 L644.1 483.9 L638.7 483.2 L633.3 482.5 L627.8 481.7 L622.2 481 L616.5 480.3 L610.7 479.6 L604.9 478.9 L599 478.2 L593 477.5 L587.1 476.8 L581 476.1 L575 475.4 L568.9 474.7 L562.9 474.1 L556.8 473.4 L550.7 472.8 L544.7 472.1 L538.6 471.5 L532.6 470.9 L526.6 470.3 L520.7 469.8 L514.8 469.2 L509 468.7 L503.2 468.1 L497.5 467.6 L491.9 467.1 L486.4 466.7 L480.9 466.2 L475.6 465.8 L472.4 465.8 L469.3 466.3 L466.2 467.2 L463.3 468.6 L460.6 470.5 L458.1 472.7 L455.9 475.3 L453.9 478.2 L452.3 481.4 L451 484.8 L450.1 488.3 L449.5 492 L448.8 498.1 L448.1 504.3 L447.5 510.5 L446.8 516.7 L446.1 522.8 L445.9 526.5 L446.1 530.1 L446.6 533.6 L447.5 537 L448.8 540.1 L450.4 543 L452.4 545.6 L454.7 547.8 L457.2 549.6 L460 551 L463 551.9 L466.1 552.4 L471.4 552.8 L476.8 553.3 L482.3 553.7 L487.9 554.2 L493.5 554.7 L499.3 555.3 L505.1 555.8 L510.9 556.3 L516.8 556.9 L522.7 557.5 L528.7 558.1 L534.7 558.7 L540.7 559.3 L546.7 560 L552.8 560.6 L558.8 561.3 L564.8 561.9 L570.8 562.6 L576.8 563.3 L582.7 564 L588.6 564.7 L594.5 565.4 L600.3 566.1 L606 566.8 L611.7 567.5 L617.3 568.2 L622.8 568.9 L628.2 569.6 L633.5 570.4 L638.7 571.1 L643.8 571.8 L648.8 572.5 L653.7 573.2 L658.4 573.9 L663 574.6 L667.4 575.2 L671.7 575.9 L675.9 576.6 L679.9 577.2 L683.7 577.9 L687.3 578.5 L690.8 579.1 L694.1 579.7 L697.3 580.3 L700.2 580.9 L703 581.4 L705.5 582 L707.9 582.5 L710 583 L712 583.5 L713.8 584 L715.3 584.4 L716.7 584.9 L717.8 585.3 L718.7 585.7 L719.5 586.1 L720 586.4 L720.3 586.7 L720.3 587"/>
<path fill="none" stroke="#ff0f3c" stroke-width="4" stroke-linejoin="round"  d="M711.2 670.7 L711.1 670.4 L710.8 670 L710.3 669.7 L709.6 669.3 L708.7 668.9 L707.5 668.5 L706.1 668 L704.5 667.6 L702.8 667.1 L700.8 666.6 L698.5 666.1 L696.1 665.6 L693.5 665 L690.7 664.4 L687.7 663.9 L684.6 663.3 L681.2 662.6 L677.7 662 L673.9 661.4 L670 660.7 L666 660.1 L661.8 659.4 L657.4 658.7 L652.9 658 L648.2 657.3 L643.4 656.6 L638.5 655.9 L633.5 655.2 L628.3 654.5 L623 653.8 L617.6 653.1 L612.1 652.4 L606.5 651.6 L600.9 650.9 L595.2 650.2 L589.3 649.5 L583.5 648.8 L577.6 648.1 L571.6 647.4 L565.6 646.7 L559.5 646 L553.5 645.3 L547.4 644.6 L541.3 644 L535.2 643.3 L529.1 642.7 L523.1 642.1 L517 641.5 L511 640.9 L505.1 640.3 L499.1 639.7 L493.3 639.2 L487.5 638.6 L481.7 638.1 L476.1 637.6 L470.5 637.1 L465 636.7 L459.6 636.2 L454.3 635.8 L449.1 635.4 L444.1 635.1 L439.2 634.7 L434.3 634.4"/>
<path fill="none" stroke="#ff0f3c" stroke-width="4" stroke-linejoin="round"  d="M705.1 727 L705 726.7 L704.7 726.4 L704.2 726 L703.5 725.7 L702.6 725.3 L701.5 724.9 L700.1 724.4 L698.6 724 L696.8 723.5 L694.9 723 L692.7 722.5 L690.4 722 L687.9 721.4 L685.1 720.9 L682.2 720.3 L679.1 719.7 L675.8 719.1 L672.4 718.5 L668.7 717.9 L664.9 717.3 L661 716.6 L656.9 715.9 L652.6 715.3 L648.2 714.6 L643.6 713.9 L638.9 713.2 L634.1 712.5 L629.2 711.8 L624.1 711.1 L618.9 710.4 L613.7 709.7 L608.3 709 L602.8 708.3 L597.3 707.6 L591.6 706.9 L585.9 706.2 L580.2 705.5 L574.4 704.8 L568.5 704.1 L562.6 703.4 L556.6 702.7 L550.7 702 L544.7 701.4 L538.7 700.7 L532.7 700.1 L526.7 699.4 L520.7 698.8 L514.7 698.2 L508.7 697.6 L502.8 697 L496.9 696.4 L491.1 695.9 L485.3 695.4 L479.6 694.8 L474 694.3 L468.4 693.8 L462.9 693.4 L457.5 692.9 L452.2 692.5 L447 692.1 L442 691.7 L437 691.3 L432.2 691 L427.4 690.7"/>
</g>
<g shape-rendering="crispEdges">
<path d="M211.5 595.2 L369 623 M500 644.1 L767 691.4" stroke="#ffffc4" stroke-width="1" stroke-dasharray="22 3 2 3" fill="none"/>
<path d="M490.3 111 L445 540 M434 640 L418.8 781" stroke="#ffffc4" stroke-width="1" stroke-dasharray="22 3 2 3" fill="none"/>
<path d="M433.5 631 L436.5 631 L444.3 571 L448.5 571.5 L444.2 556.5 L437.5 570 L441.5 570.6 Z" fill="#ffffc4"/>
<path d="M430.5 632.6 L430.5 635.4 L381.5 627.6 L380.6 631.6 L368 623.2 L382.5 619.2 L381.9 623.4 Z" fill="#ffffc4"/>
<path d="M439 633 L439 635.8 L501 640.3 L500.5 645.6 L514.3 639.6 L501.9 632.4 L501.5 637 Z" fill="#ffffc4"/>
<path d="M469 592.5 H447.5 L438.5 626" stroke="#ffff00" stroke-width="1" fill="none"/>
<text x="474.3" y="598.6" font-family="Liberation Sans, sans-serif" font-size="14.3" fill="#ffff00" textLength="36.3" lengthAdjust="spacing">0.000</text>
<path d="M468 648.8 H441.5 L430.5 684" stroke="#ffff00" stroke-width="1" fill="none"/>
<path d="M436.6 659.5 L432.2 673.5" stroke="#ffff00" stroke-width="3" fill="none"/>
<path d="M433 673.5 L435 676 L433 678.5 L431 676 Z" stroke="#ffff00" stroke-width="0.9" fill="none"/>
<text x="469" y="654.6" font-family="Liberation Sans, sans-serif" font-size="14" fill="#f0f020" fill-opacity="0.85" textLength="35" lengthAdjust="spacing">0.000</text>
<rect x="428" y="598" width="4" height="8.5" fill="#ffff00"/>
<path d="M430 606 L434.8 627 M427 604 L430.5 608 L433.5 604" stroke="#ffff00" stroke-width="1" fill="none"/>
<rect x="422" y="651.5" width="3.6" height="8.5" fill="#ffff00"/>
<path d="M433.5 640 L431.5 664 M432 650 L429 668" stroke="#ffff00" stroke-width="1" fill="none"/>
<path d="M417.8 620.8 H427 M422 620.8 V630.5 M422 625.6 H431.5" stroke="#ffff00" stroke-width="1.2" fill="none"/>
<path d="M438 606 L442 596 M440 604 L445 597" stroke="#ffff00" stroke-width="1" fill="none"/>
<text x="493" y="637.5" font-family="Liberation Sans, sans-serif" font-size="7" fill="#ffff00">1</text>
<path d="M434 629 Q436 625 440 627 M431.5 640 Q433 645 437.5 643.5 M439.5 628 L441 630 M438 640 L440 642" stroke="#2a9ae4" stroke-width="2" fill="none"/>
<rect x="430.5" y="630.5" width="8" height="8" fill="#fff" stroke="#000" stroke-width="1"/>
<rect x="423.5" y="686.5" width="8" height="8" fill="#fff" stroke="#000" stroke-width="1"/>
<path d="M719 233.5 H697.5 L686.5 268" stroke="#ffff00" stroke-width="1" fill="none"/>
<path d="M691 260 L688.2 266.5 L692.3 263.5" stroke="#ffff00" stroke-width="1" fill="none"/>
<text x="724.5" y="239.2" font-family="Liberation Sans, sans-serif" font-size="14.3" fill="#ffff00">Origin</text>
</g>
</svg>
<!-- ===== ribbon ===== -->
<div id="ribbon" class="abs"></div>
<div class="vline" style="left:355px;top:0;height:86px"></div>
<div class="vline" style="left:545px;top:0;height:86px"></div>
<div class="hline" style="left:0;top:86px;width:767px"></div>
<div class="pressed" style="left:11px;top:10px;width:28px;height:28px"></div>
<div class="pressed" style="left:107px;top:10px;width:28px;height:28px"></div>
<div class="pressed" style="left:237px;top:10px;width:28px;height:28px"></div>
<svg class="abs" style="left:0;top:0" width="767" height="86" viewBox="0 0 767 86">
 <!-- 1 solid box -->
 <g>
  <path d="M17.5 20 L19.5 17.2 H32 V28 L30 30.5 Z" fill="#5fe8ee"/>
  <path d="M19.5 17.4 H32 M31.6 17.6 V28" stroke="#1a7a4a" stroke-width="1" stroke-dasharray="1 1" fill="none"/>
  <path d="M30.6 20 V30 " stroke="#15308a" stroke-width="1.2" stroke-dasharray="1 1" fill="none"/>
  <rect x="17.5" y="20" width="12.5" height="10.5" fill="#fff"/>
  <path d="M17.5 20 V30.5" stroke="#777" stroke-width="0.9" stroke-dasharray="1.2 1" fill="none"/>
  <path d="M17.5 30.5 H30 L32 28" stroke="#555" stroke-width="0.9" fill="none"/>
 </g>
 <!-- 2 surface -->
 <g>
  <path d="M45.3 31.6 V21.4 L50 17.4 H59 L61 19.5 V29.6 Q58.5 27.5 55 27.6 H50 Q47.5 29.2 45.3 31.6 Z" fill="#4ff4f8" stroke="#8a8a8a" stroke-width="0.8"/>
  <path d="M47 28.5 V21 M49 27 V19.5 M51 26.5 V18.5 M53 26.5 V18.5 M55 26.5 V18.5 M57 26.5 V18.5 M59 27.5 V19" stroke="#fff" stroke-width="0.9" stroke-dasharray="1 1"/>
  <path d="M45.3 31.6 Q47.5 29.2 50 27.6 H55 Q58.5 27.5 61 29.6" stroke="#8a1a9a" stroke-width="0.9" stroke-dasharray="1 1" fill="none"/>
  <path d="M61 19.5 V29.6" stroke="#1a8a3a" stroke-width="0.9" stroke-dasharray="1 1" fill="none"/>
 </g>
 <!-- 3 sketch edit -->
 <g>
  <rect x="79.5" y="18.5" width="16" height="13" fill="#c9c4b2" stroke="#0b2a8c" stroke-width="1.3"/>
  <rect x="79" y="18" width="17" height="3" fill="#0b2a8c"/>
  <path d="M85 29.5 L86.5 26 L96 15.5 L98.5 18 L89 28 Z" fill="#f2d43a" stroke="#6a5a10" stroke-width="0.7"/>
  <path d="M96 15.5 L97.5 14 L100 16.5 L98.5 18 Z" fill="#c0392b"/>
  <path d="M85 29.5 L86.5 26 L89 28 Z" fill="#333"/>
 </g>
 <!-- 4 thin feature -->
 <g>
  <rect x="115.5" y="18" width="13" height="13.5" fill="#b5f3f3" stroke="#777" stroke-width="0.9"/>
  <path d="M116 31 L128 19 M116 27 L124 19 M120 31 L128 23 M116 23 L120 19 M124 31 L128 27" stroke="#fff" stroke-width="1.1"/>
  <path d="M115.5 18 V31 M115.5 18 H128" stroke="#333" stroke-width="1" stroke-dasharray="1 1.3" fill="none"/>
  <path d="M111 29.8 L126.8 14.2" stroke="#0b2a9a" stroke-width="1.5"/>
 </g>
 <!-- 5 bracket -->
 <path d="M160.5 17.5 H146.5 V31.5 H160.5" fill="none" stroke="#0b2a9a" stroke-width="1.2"/>
 <!-- 6 flip -->
 <g>
  <path d="M175.2 31.2 L190.8 15.6" stroke="#0b2a9a" stroke-width="1.4"/>
  <path d="M177 17.5 L181.5 22 M177 17.5 V21 M177 17.5 H180.5" stroke="#999" stroke-width="1.1" fill="none"/>
  <path d="M185 24.5 L189.5 29" stroke="#555" stroke-width="1.1"/><path d="M190.2 29.7 L186 29.5 L190 25.5 Z" fill="#333"/>
 </g>
 <!-- 7 constant section -->
 <g>
  <path d="M215.5 15 V33.5 M213 31.5 H233" stroke="#9a9a9a" stroke-width="1" fill="none"/>
  <path d="M215 24.5 H232" stroke="#6a0a7a" stroke-width="2"/>
 </g>
 <!-- 8 variable section -->
 <g>
  <path d="M243.5 14.5 V33.5 M241 31.5 H261" stroke="#9a9a9a" stroke-width="1" fill="none"/>
  <path d="M243.5 24.5 Q255 24 260 15" stroke="#6a0a7a" stroke-width="2" fill="none"/>
 </g>
 <!-- pause -->
 <rect x="367.4" y="18" width="4.8" height="12.4" fill="#10248c"/><rect x="374.3" y="18" width="4.8" height="12.4" fill="#10248c"/>
 <!-- no-entry -->
 <rect x="388.5" y="14.5" width="19" height="19" fill="#ebebeb" stroke="#d2d2d2"/>
 <circle cx="398" cy="23.9" r="5.3" fill="none" stroke="#555d66" stroke-width="1.9"/><path d="M394.2 20.2 L401.8 27.6" stroke="#555d66" stroke-width="1.9"/>
 <!-- wireframe -->
 <rect x="411.5" y="14.5" width="19.5" height="19" fill="#e9e9e9" stroke="#d2d2d2"/>
 <path d="M412 21.5 L416 17.5 L419.2 21.5 L423.1 17.5 L427 21.5 L429.8 19.5 M412 21.5 V27.5 L416 30.5 L419.2 27.5 L423.1 30.5 L427 27.5 L429.8 29 V19.5 M416 22 V30.5 M419.2 21.5 V27.5 M423.1 22 V30.5 M427 21.5 V27.5 M412 21.5 L416 22 L419.2 21.5 L423.1 22 L427 21.5 M414 16.5 L421.5 26 M425.5 16.5 L418 26" fill="none" stroke="#5a6068" stroke-width="0.8"/>
 <!-- shaded -->
 <rect x="434.5" y="14.5" width="19.5" height="19" fill="#d9d9d9" stroke="#8a9097"/>
 <path d="M435.5 18.4 H452.6 V21 L449.2 24.5 L444.6 19.2 L440 24.5 L435.5 19.2 Z" fill="#fff"/>
 <path d="M435.5 19.1 L440 24.3 V29.5 L435.5 25 Z M444.6 19.1 L449.2 24.3 V29.5 L444.6 25 Z" fill="#7fd2da"/>
 <path d="M440 24.3 L444.6 19.1 V25 L440 29.5 Z M449.2 24.3 L452.6 20.4 V25.6 L449.2 29.5 Z" fill="#c4f2f5"/>
 <!-- glasses -->
 <g fill="#f6f0d2" stroke="#1e1e1e" stroke-width="1">
  <circle cx="463.8" cy="25.3" r="3.3"/><circle cx="473" cy="25.3" r="3.3"/>
 </g>
 <path d="M467 24.6 Q468.4 23.4 469.8 24.6" fill="none" stroke="#1e1e1e" stroke-width="1"/>
 <path d="M460.6 24.5 Q460.4 20.8 463.6 20.6 M476.3 24.5 Q477 20.6 479.8 21.4" fill="none" stroke="#a8501a" stroke-width="1.1"/>
 <!-- check -->
 <defs><linearGradient id="okb" x1="0" y1="0" x2="0" y2="1"><stop offset="0" stop-color="#bfe2fb"/><stop offset="1" stop-color="#93caf1"/></linearGradient></defs>
 <rect x="485.5" y="10.5" width="27" height="27" rx="3" fill="url(#okb)" stroke="#a9d2f0"/>
 <path d="M491 23.5 L494 21 L497.5 25.5 L505.5 17 L508 19.5 L497.5 31 Z" fill="#0f9a20" stroke="#0a6a14" stroke-width="0.6"/>
 <!-- X -->
 <path d="M521.5 19.5 L534.5 30.5 M534 19.5 L521.5 30.5" stroke="#cc1a0c" stroke-width="3.6" stroke-linecap="butt"/>
</svg>
<!-- ===== toolbar row ===== -->
<div class="abs" style="left:0;top:87px;width:767px;height:24px;background:#fcfcfc"></div>
<div class="pressed" style="left:687px;top:87px;width:23px;height:24px;box-shadow:none;border-color:#d0d0d0;background:#e6e6e6"></div>
<svg class="abs" style="left:0;top:87px" width="767" height="24" viewBox="0 87 767 24">
 <!-- new -->
 <path d="M8.5 91.5 H16.5 L20 95 V105.5 H8.5 Z M16.5 91.5 V95 H20" fill="#fff" stroke="#c2c2c2" stroke-width="1"/>
 <path d="M27.5 91 V106" stroke="#c8c8c8"/>
 <!-- open -->
 <path d="M33.5 105 V95 H39 L40.5 96.5 H45 V99" fill="none" stroke="#b9b9b9"/>
 <path d="M33.5 105 L37 98.5 H49 L45.5 105 Z" fill="#c9c9c9" stroke="#b0b0b0" stroke-width="0.8"/>
 <path d="M41 94 Q44.5 90.5 48 94.5" fill="none" stroke="#b0b0b0" stroke-width="1.2"/><path d="M49.3 92.5 L48.6 96.6 L45.6 94.8 Z" fill="#b0b0b0"/>
 <!-- hidden icon sliver -->
 <rect x="57.5" y="93" width="4" height="9" fill="#20e0f0"/><rect x="57" y="101" width="4.5" height="5" fill="#e8c020"/><path d="M57.3 92.5 V106" stroke="#22328a"/>
 <!-- bracket sliver -->
 <path d="M343.5 92.5 H345.5 V104.5 H343.5" fill="none" stroke="#0b2a9a" stroke-width="1.1"/>
 <!-- folder red X -->
 <path d="M354.5 95.5 H360 L361.5 94 H366 V95.5 H369.5 V107 H354.5 Z" fill="#f6ea35" stroke="#8a7a10" stroke-width="0.9"/>
 <path d="M357 97.5 L367 106 M367 97.5 L357 106" stroke="#e8101a" stroke-width="1.9"/>
 <path d="M363.5 93 Q365.5 90.5 368 91.8" fill="none" stroke="#222" stroke-width="1"/><path d="M369.8 90.6 L369 94 L366.6 92.2Z" fill="#222"/>
 <!-- windows -->
 <rect x="381.5" y="91.5" width="11" height="8" fill="#fff" stroke="#8a8a8a"/>
 <rect x="378.5" y="95.5" width="10" height="6" fill="#fff" stroke="#8a8a8a"/><rect x="378.5" y="95.5" width="10" height="2.2" fill="#2a55c8" stroke="#2a55c8" stroke-width="0.6"/>
 <rect x="378.5" y="101.5" width="5" height="4" fill="#f4f0e0" stroke="#8a8a8a"/><rect x="385.5" y="99.5" width="4" height="3" fill="#fff" stroke="#8a8a8a"/>
 <path d="M402.3 96 H408.7 L405.5 100.2 Z" fill="#333"/>
 <path d="M413.5 91 V107" stroke="#cfcfcf"/>
 <!-- undo -->
 <path d="M423 96.5 Q429 92 433 96.5 Q435 101 430 105" fill="none" stroke="#a6a6a6" stroke-width="2.2"/><path d="M419.5 93 L426 94.5 L421.5 99.5 Z" fill="#a6a6a6"/>
 <path d="M443.3 96.5 H448.7 L446 100 Z" fill="#b5b5b5"/>
 <!-- redo -->
 <path d="M468.5 96.5 Q462.5 92 458.5 96.5 Q456.5 101 461.5 105" fill="none" stroke="#a6a6a6" stroke-width="2.2"/><path d="M472 93 L465.5 94.5 L470 99.5 Z" fill="#a6a6a6"/>
 <path d="M480.8 96.5 H486.2 L483.5 100 Z" fill="#b5b5b5"/>
 <!-- regen list -->
 <g stroke="#b0b0b0" fill="none"><rect x="495.5" y="92.5" width="3" height="3"/><rect x="495.5" y="97.5" width="3" height="3"/><rect x="495.5" y="102.5" width="3" height="3"/>
 <path d="M500.5 99 H508 M500.5 104 H508"/><path d="M502 95 Q505 90.5 508 94.5 M508 94.5 Q506 98 503 96" stroke-width="1.1"/></g>
 <!-- binoculars -->
 <g fill="#1c1c1c"><path d="M519 106.5 V98 L521 93 H524.5 L525.5 98 V106.5 Z"/><path d="M528 106.5 V98 L529 93 H532.5 L534.5 98 V106.5 Z"/><rect x="524.5" y="96" width="4.5" height="5"/><rect x="521.5" y="91.5" width="2.6" height="2"/><rect x="529.5" y="91.5" width="2.6" height="2"/></g>
 <path d="M521.5 99 V105 M530.5 99 V105" stroke="#fff" stroke-width="0.8"/>
 <path d="M540.5 91 V107" stroke="#cfcfcf"/>
 <!-- 15/fx -->
 <rect x="547" y="91.5" width="15" height="14.5" fill="#fff" stroke="#1a2a8a"/>
 <path d="M547 106 L562 91.5" stroke="#1a2a8a"/>
 <text x="548" y="98.5" font-size="7.5" font-weight="bold" fill="#111" font-family="Liberation Sans, sans-serif">15</text>
 <text x="553.5" y="105" font-size="7.5" font-weight="bold" fill="#111" font-family="Liberation Sans, sans-serif">fx</text>
 <!-- TREE labels -->
 <g font-family="Liberation Mono, monospace" font-weight="bold" font-size="10.8" fill="#111">
  <text x="569.5" y="98.6" textLength="14" lengthAdjust="spacingAndGlyphs">TREE</text><text x="569.5" y="107.3" textLength="8" lengthAdjust="spacingAndGlyphs">BL</text>
  <text x="593.5" y="98.6" textLength="14" lengthAdjust="spacingAndGlyphs">TREE</text><text x="593.5" y="107.3" textLength="6" lengthAdjust="spacingAndGlyphs">ID</text>
  <text x="617.5" y="98.6" textLength="14" lengthAdjust="spacingAndGlyphs">TREE</text><text x="617.5" y="107.3" textLength="11" lengthAdjust="spacingAndGlyphs">REP</text>
  <text x="641.5" y="98.6" textLength="14" lengthAdjust="spacingAndGlyphs">TREE</text><text x="641.5" y="107.3" textLength="16" lengthAdjust="spacingAndGlyphs">COMP</text>
  <text x="665.5" y="98.6" textLength="14" lengthAdjust="spacingAndGlyphs">TREE</text><text x="665.5" y="107.3" textLength="16" lengthAdjust="spacingAndGlyphs">COMM</text>
 </g>
 <text x="689.5" y="103" font-size="10.5" fill="#222" font-family="Liberation Sans, sans-serif" textLength="19" lengthAdjust="spacingAndGlyphs">±.01</text>
 <defs><radialGradient id="sph" cx="0.35" cy="0.3" r="0.75"><stop offset="0" stop-color="#c8c8c8"/><stop offset="0.45" stop-color="#6a6a6a"/><stop offset="1" stop-color="#1a1a1a"/></radialGradient></defs>
 <circle cx="721" cy="98.5" r="7.3" fill="url(#sph)"/>
 <path d="M737.8 96.5 H743.2 L740.5 100 Z" fill="#444"/>
 <path d="M753 94.5 H756 M753 94.5 V106 H764" fill="none" stroke="#1a2a8a"/><path d="M756 91 V101 H767" fill="none" stroke="#777"/>
 <text x="757.5" y="99" font-size="8" font-weight="bold" fill="#111" font-family="Liberation Sans, sans-serif">AB</text>
</svg>
<!-- ===== tree ===== -->
<div id="tree" class="abs"></div>
<div class="abs" style="left:204px;top:111px;width:3px;height:670px;background:#c9c9c9"></div>
<div class="abs" style="left:207px;top:111px;width:4px;height:670px;background:#fff"></div>
<div class="abs" style="left:27px;top:124px;width:31px;height:29px;background:#f0f0f0;border:1px solid #dcdcdc;border-bottom:0"></div>
<div class="abs" style="left:57px;top:124px;width:6px;height:29px;background:#f0f0f0;border:1px solid #dcdcdc;border-bottom:0"></div>
<div class="hline" style="left:27px;top:153px;width:177px;background:#dedede"></div>
<div class="hline" style="left:0;top:124px;width:204px;background:#dcdcdc"></div>
<div class="hline" style="left:0;top:182px;width:204px;background:#d6d6d6"></div>
<svg class="abs" style="left:0;top:124px" width="62" height="30" viewBox="0 124 62 30">
 <g fill="#fff" stroke="#333" stroke-width="1"><path d="M9.5 133 V143 M11.5 138.5 H16" fill="none"/><rect x="7.5" y="129.5" width="4" height="4"/><rect x="7.5" y="136.5" width="4" height="4"/><rect x="7.5" y="143.5" width="4" height="4"/><rect x="15.5" y="136.5" width="4" height="4"/></g>
 <g stroke="#7a7000" stroke-width="0.9" fill="#fbf86a"><path d="M34.5 139 V131 L36 129.5 H40 L41 131 H45.5 V139 Z"/><path d="M37.5 143 V135 L39 133.5 H43 L44 135 H48.5 V143 Z"/><path d="M40.5 147.5 V139 L42 137.5 H46 L47 139 H51.5 V147.5 Z"/></g>
 <path d="M36 132.5 H44 M39 136.5 H47 M42 141 H50.5 M42 143 H50.5 M42 145 H50.5" stroke="#fffde0" stroke-width="1"/>
</svg>
<div class="row" style="left:20px;top:159.5px;font-weight:bold;color:#444;font-size:12.2px">Model Tree</div>
<svg class="abs" style="left:0;top:183px" width="80" height="290" viewBox="0 183 80 290">
 <!-- PRT -->
 <path d="M5 188 L6.5 186.5 H16.5 V195.5 L14.8 197.3 Z" fill="#12309a" stroke="#12309a" stroke-width="0.7"/><rect x="5" y="187.8" width="9.8" height="9.5" fill="#8af2fa" stroke="#4a6aaa" stroke-width="0.7"/>
 <!-- csys -->
 <g stroke="#8a3a0a" stroke-width="1.1" fill="none"><path d="M24 204 L36 217 M35.5 203 L27 217.5 M23 211 H36"/></g>
 <g stroke="#555" stroke-width="0.8" fill="none"><path d="M23.5 201.5 L26.5 204.5 M26.5 201.5 L25 203 M36.5 209.5 L39 212.5 M39 209.5 L36.5 212.5 M23.5 215 H26 L23.5 217.5 H26"/></g>
 <!-- datum planes -->
 <g stroke="#8a3a0a" stroke-width="1.4" fill="none"><path d="M27 223.5 H38 L34 232 H23 Z"/><path d="M27 241.5 H38 L34 250 H23 Z"/><path d="M27 259.5 H38 L34 268 H23 Z"/><path d="M27 367.5 H38 L34 376 H23 Z"/></g>
 <!-- axes -->
 <g stroke="#8a3a0a" stroke-width="1.6" stroke-dasharray="3.5 1.8" fill="none"><path d="M33.5 274.5 L25.5 289"/><path d="M33.5 292.5 L25.5 307"/><path d="M33.5 310.5 L25.5 325"/></g>
 <!-- points -->
 <g stroke="#8a3a0a" stroke-width="1.2" fill="none"><path d="M28.5 328.5 L32.5 332.5 M32.5 328.5 L28.5 332.5 M23.5 338 L27.5 342 M27.5 338 L23.5 342 M33.5 336 L37.5 340 M37.5 336 L33.5 340"/></g>
 <!-- expanders -->
 <path d="M9.5 349.5 L15.5 353.5 L9.5 357.5 Z M9.5 403.5 L15.5 407.5 L9.5 411.5 Z" fill="#8e8e8e"/>
 <path d="M7.5 440.5 H16 L11.7 447 Z" fill="#8e8e8e"/>
 <!-- CYL extrude icon -->
 <rect x="24.5" y="353.5" width="6" height="6" fill="#8af2fa" stroke="#444" stroke-width="0.9"/>
 <path d="M24.5 353.5 L31 347.5 H37.5 V353 L30.5 359.5 M30.5 353.5 L37.5 347.5" fill="none" stroke="#555" stroke-width="0.9" stroke-dasharray="2 1"/>
 <path d="M31 348 L37 348 L37 353 Z" fill="#b5f5fa" opacity="0.8"/>
 <!-- sketch greyed -->
 <rect x="23" y="382.5" width="16" height="15" fill="#e3e3e3"/><path d="M24.5 393.5 Q31 380 37.5 393.5" fill="none" stroke="#b5b59a" stroke-width="1.2"/>
 <!-- wrap -->
 <g fill="none" stroke="#b02ad8" stroke-width="1"><ellipse cx="31" cy="402.5" rx="5.8" ry="2.3"/><path d="M25.2 402.5 V412 Q31 416.5 36.8 412 V402.5 M25.2 408.5 Q30 405 36.8 405.5 M25.2 411.5 Q30 408.5 36.8 409 M25.2 405.5 Q28 403.5 31 404.5"/></g>
 <!-- insert arrow -->
 <path d="M25.5 423 H31 V419.5 L37.7 425.4 L31 431.3 V427.8 H25.5 Z" fill="#e81010"/><path d="M31 431.3 V427.8 H25.5 L27 426.4 H31.5 L36 425.6 L37.7 425.4 Z" fill="#8a0a0a"/>
 <!-- sweep icon -->
 <path d="M28 436.5 L39 442 V451 L30 449.5 L23.5 441.5 Z" fill="#e6f6fa" stroke="#333" stroke-width="0.9"/>
 <path d="M28 436.5 L30 449.5 M28 436.5 L23.5 441.5" stroke="#333" stroke-width="0.8" fill="none"/>
 <path d="M24.5 441 L28 437.5 L29 442.5 Z M31 444.5 L38.5 450.5 L30.5 449 Z" fill="#6ac8f0"/>
 <!-- star -->
 <g stroke="#e8e000" stroke-width="1.3"><path d="M45.7 438 V446 M41.9 442 H49.5 M43 439.3 L48.4 444.7 M48.4 439.3 L43 444.7"/><path d="M65.6 456.4 V464.4 M61.8 460.4 H69.4 M62.9 457.7 L68.3 463.1 M68.3 457.7 L62.9 463.1"/></g>
 <!-- section icon -->
 <rect x="43.5" y="458" width="12" height="11" fill="#c9c4b2" stroke="#0b2a8c" stroke-width="1.3"/><rect x="43" y="457.5" width="13" height="2.6" fill="#0b2a8c"/>
 <path d="M46.5 467 L47.5 464 L56 455.5 L58 457.5 L49.5 466 Z" fill="#f2d43a" stroke="#6a5a10" stroke-width="0.6"/><path d="M56 455.5 L57.2 454.3 L59.2 456.3 L58 457.500Z" fill="#c0392b"/>
</svg>
<div class="row" style="left:22px;top:183px">PRT0001.PRT</div>
<div class="row" style="left:43px;top:201px">1_XYZ</div>
<div class="row" style="left:43px;top:219px">1_YZ</div>
<div class="row" style="left:43px;top:237px">1_XZ</div>
<div class="row" style="left:43px;top:255px">1_XY</div>
<div class="row" style="left:43px;top:273px">1_X</div>
<div class="row" style="left:43px;top:291px">1_Y</div>
<div class="row" style="left:43px;top:309px">1_Z</div>
<div class="row" style="left:43px;top:327px">1_PNT</div>
<div class="row" style="left:42px;top:345px">CYLINDER</div>
<div class="row" style="left:42px;top:363px">WRAP_DTM</div>
<div class="row" style="left:42px;top:381px;color:#b9b9b9">Sketch 1</div>
<div class="row" style="left:42px;top:399px">Wrap 1</div>
<div class="row" style="left:42px;top:417px">Insert Here</div>
<div class="row" style="left:51px;top:435px">Sweep 1</div>
<div class="row" style="left:71px;top:453px">Section 1</div>
<!-- ===== tabs + panel ===== -->
<div class="tab act" style="left:61px;width:78px">References</div>
<div class="tab" style="left:139px;width:58px">Options</div>
<div class="tab" style="left:196px;width:67px">Tangency</div>
<div class="tab" style="left:262px;width:73px">Properties</div>
<div id="panel" class="abs">
 <div class="abs" style="left:23px;top:35px;width:235px;height:123px;border:1px solid #a2a2a2;background:#f1eaf8"></div>
 <div class="abs" style="left:24px;top:36px;width:233px;height:21px;background:linear-gradient(#f7f7f7,#ebebeb);border-bottom:1px solid #d5d5d5"></div>
 <div class="abs" style="left:24px;top:57px;width:104px;height:19px;background:#b4e3fb"></div>
 <div class="abs" style="left:24px;top:76px;width:233px;height:1px;background:#dcd6e2"></div>
 <div class="vline" style="left:129px;top:36px;height:41px;background:#dadada"></div>
 <div class="vline" style="left:168px;top:36px;height:41px;background:#dadada"></div>
 <div class="vline" style="left:207px;top:36px;height:41px;background:#dadada"></div>
 <div class="lbl" style="left:35px;top:42px;font-weight:bold;color:#4a4a4a;font-size:11.5px">Trajectories</div>
 <div class="lbl" style="left:138.5px;top:42px;font-weight:bold;color:#4a4a4a;font-size:11.5px">X</div>
 <div class="lbl" style="left:178px;top:42px;font-weight:bold;color:#4a4a4a;font-size:11.5px">N</div>
 <div class="lbl" style="left:217.5px;top:42px;font-weight:bold;color:#4a4a4a;font-size:11.5px">T</div>
 <div class="lbl" style="left:39px;top:61px;color:#222;font-size:10.8px">Origin</div>
 <div class="abs" style="left:137px;top:62px;width:11px;height:11px;background:#c2c2c2;border:1px solid #8e8e8e"></div>
 <div class="abs" style="left:175px;top:62px;width:11px;height:11px;background:#fff;border:1px solid #555"></div>
 <svg class="abs" style="left:173px;top:56px" width="22" height="22" viewBox="0 0 22 22"><path d="M4.2 11 L6.3 9.3 L8.7 13 Q12 6.8 17.3 3.2 L18 4.3 Q12.5 9.5 9.3 16.5 H8.2 Z" fill="#111"/></svg>
 <div class="abs" style="left:215px;top:62px;width:11px;height:11px;background:#fff;border:1px solid #333"></div>
 <div class="abs" style="left:231px;top:62px;width:11px;height:11px;background:#c2c2c2;border:1px solid #555"></div>
 <div class="btn" style="left:203px;top:163px;width:66px;height:21px;line-height:19px">Details...</div>
 <div class="lbl" style="left:23px;top:186px">Section plane control</div>
 <div class="dd" style="left:23px;top:199px;width:176px;height:21px">Normal To Trajectory<i></i></div>
 <div class="lbl" style="left:23px;top:225px">Horizontal/Vertical control</div>
 <div class="dd" style="left:23px;top:238px;width:176px;height:21px">Normal To Surface<i></i></div>
 <div class="btn" style="left:203px;top:238px;width:55px;height:22px;line-height:20px">Next</div>
 <svg class="abs" style="left:0;top:165px" width="240" height="70" viewBox="0 0 240 70">
  <defs><filter id="sh" x="-10%" y="-20%" width="120%" height="150%"><feGaussianBlur stdDeviation="1.9"/></filter></defs>
  <rect x="10.5" y="16.5" width="206" height="45" rx="22.5" fill="none" stroke="#555" stroke-opacity="0.550" stroke-width="3.5" filter="url(#sh)"/>
  <rect x="10.3" y="14.7" width="207" height="45.5" rx="22.7" fill="none" stroke="#b8432d" stroke-width="3.4"/>
 </svg>
</div>

</body></html>
